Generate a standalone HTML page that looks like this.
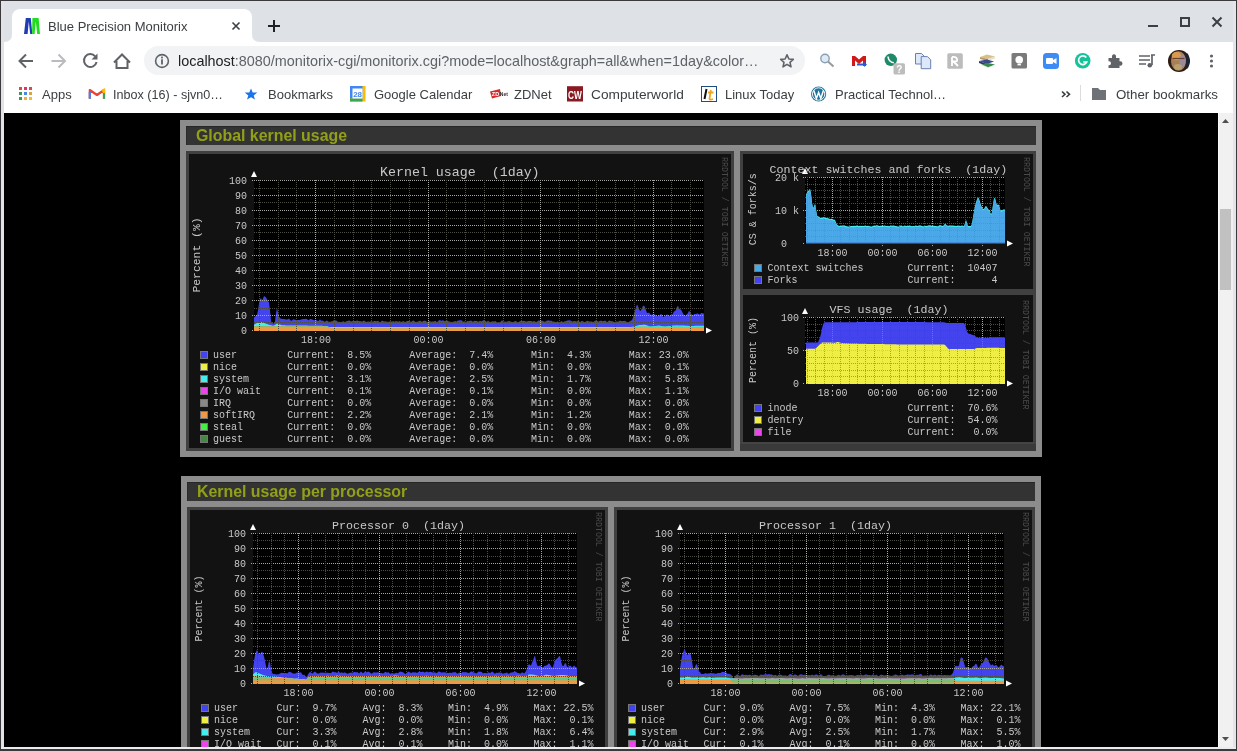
<!DOCTYPE html>
<html><head><meta charset="utf-8">
<style>
*{box-sizing:border-box}
html,body{margin:0;padding:0}
body{width:1237px;height:751px;overflow:hidden;position:relative;background:#dee1e6;font-family:"Liberation Sans",sans-serif}
.a{position:absolute}
svg.a{display:block;will-change:transform}
.ui{will-change:transform;font-family:"Liberation Sans",sans-serif;font-size:13px;color:#3c4043;white-space:nowrap;line-height:16px}
.panel{position:absolute;background:#8c8c8c}
.tbar{position:absolute;background:#333;border-top:1px solid #262626;border-left:1px solid #2a2a2a}
.ttl{will-change:transform;position:absolute;font-family:"Liberation Sans",sans-serif;font-weight:bold;font-size:15.9px;color:#92a018;white-space:nowrap;line-height:19px}
</style></head>
<body>
<!-- tab -->
<div class="a" style="left:12px;top:9px;width:240px;height:34px;background:#fff;border-radius:8px 8px 0 0"></div>
<div id="tabtitle" class="a ui" style="left:48px;top:19px;color:#3c4043">Blue Precision Monitorix</div>

<!-- toolbar -->
<div class="a" style="left:1px;top:42px;width:1235px;height:71px;background:#fff"></div>
<div class="a" style="left:144px;top:46px;width:661px;height:29px;background:#f1f3f4;border-radius:15px"></div>
<div id="url" class="a ui" style="left:178px;top:52px;font-size:14.4px;line-height:18px;color:#5f6368"><span style="color:#202124">localhost</span>:8080/monitorix-cgi/monitorix.cgi?mode=localhost&amp;graph=all&amp;when=1day&amp;color…</div>


<!-- chrome icons -->
<svg class="a" style="left:0;top:0" width="1237" height="113" viewBox="0 0 1237 113">
 <!-- tab flares -->
 <path d="M4,42 Q12,42 12,34 L12,42Z" fill="#fff"/>
 <path d="M252,34 Q252,42 260,42 L252,42Z" fill="#fff"/>
 <!-- favicon M -->
 <polygon points="24,34 25.8,18 30.8,18 32.3,34 30.2,34 28.8,21.5 27.6,34" fill="#1d3db5"/>
 <polygon points="32.1,34 32.4,18 38.6,18 40,34 37.2,34 35.8,21.5 34.6,34" fill="#22dc22"/>
 <!-- tab close -->
 <path d="M232.5,22.5 L239.5,29.5 M239.5,22.5 L232.5,29.5" stroke="#3c4043" stroke-width="1.6" fill="none"/>
 <!-- new tab + -->
 <path d="M274,20 L274,32 M268,26 L280,26" stroke="#202124" stroke-width="2" fill="none"/>
 <!-- window controls -->
 <path d="M1148,26 L1158,26" stroke="#3c4043" stroke-width="2"/>
 <rect x="1181" y="18" width="8" height="8" fill="none" stroke="#3c4043" stroke-width="2"/>
 <path d="M1212.5,17.5 L1221.5,26.5 M1221.5,17.5 L1212.5,26.5" stroke="#3c4043" stroke-width="2" fill="none"/>
 <!-- back / fwd / reload / home -->
 <path d="M19.5,61 L33,61 M26,54.5 L19.5,61 L26,67.5" stroke="#5f6368" stroke-width="2" fill="none"/>
 <path d="M51.5,61 L65,61 M58.5,54.5 L65,61 L58.5,67.5" stroke="#b9bbbe" stroke-width="2" fill="none"/>
 <path d="M95.2,56.3 A6.4,6.4 0 1 0 96.6,62" stroke="#5f6368" stroke-width="2" fill="none"/>
 <polygon points="97.5,53.5 97.5,59.5 91.5,59.5" fill="#5f6368"/>
 <path d="M116.5,61 L116.5,68 L127.5,68 L127.5,61 M114,62.5 L122,54.5 L130,62.5" stroke="#5f6368" stroke-width="2" fill="none"/>
 <!-- info -->
 <circle cx="162" cy="61" r="6.4" fill="none" stroke="#5f6368" stroke-width="1.6"/>
 <rect x="161.1" y="59.3" width="1.8" height="5.2" fill="#5f6368"/>
 <rect x="161.1" y="56.6" width="1.8" height="1.8" fill="#5f6368"/>
 <!-- star -->
 <polygon points="787,54.8 788.9,59 793.3,59.4 790,62.3 791,66.8 787,64.4 783,66.8 784,62.3 780.7,59.4 785.1,59" fill="none" stroke="#5f6368" stroke-width="1.6" stroke-linejoin="round"/>
 <!-- ext: magnifier -->
 <circle cx="825" cy="58.5" r="4.2" fill="#dfeaf5" stroke="#8aa0b8" stroke-width="1.4"/>
 <path d="M828,61.5 L833.5,66.5" stroke="#9a9a9a" stroke-width="2"/>
 <!-- ext: gmail red -->
 <path d="M852,56 L852,66 L855,66 L855,60.5 L859,64 L863,60.5 L863,66 L866,66 L866,56 L863,56 L859,59.5 L855,56Z" fill="#d01a1a"/>
 <path d="M857,63.5 L864,63.5 L864,62 L867,64.5 L864,67 L864,65.5 L857,65.5Z" fill="#2a5ad8"/>
 <!-- ext: green phone + ? -->
 <circle cx="890.8" cy="59.8" r="6.2" fill="#1e8a6a"/>
 <path d="M888,56.5 Q888.5,62 893.8,62.8" stroke="#fff" stroke-width="1.6" fill="none"/>
 <rect x="893.5" y="63.3" width="11.5" height="11.2" rx="1.5" fill="#bdbdbd"/>
 <text x="899.2" y="72.6" font-family="Liberation Sans" font-weight="bold" font-size="10" fill="#fff" text-anchor="middle">?</text>
 <!-- ext: copy -->
 <path d="M915.5,53.5 L921.5,53.5 L924.5,56.5 L924.5,64 L915.5,64Z" fill="#dde8fa" stroke="#6a80b0" stroke-width="1"/>
 <path d="M921.2,56.6 L927.5,56.6 L930.7,59.8 L930.7,68.7 L921.2,68.7Z" fill="#dde8fa" stroke="#6a80b0" stroke-width="1"/>
 <!-- ext: R gray -->
 <rect x="947.3" y="53.2" width="15.5" height="15.5" rx="1.5" fill="#bcbcbc"/>
 <path d="M952,57 L952,66 M952,57 Q958,56.5 957,61 Q955,62 953,61 L958,66" stroke="#fff" stroke-width="1.8" fill="none"/>
 <!-- ext: books -->
 <path d="M980,57 L987,54.5 L995,56.5 L988,59Z" fill="#d8c08a"/>
 <path d="M980,57 L988,59 L988,61 L980,59Z" fill="#b89860"/>
 <path d="M988,59 L995,56.5 L995,58.5 L988,61Z" fill="#e8e0c8"/>
 <path d="M979,61 L987,59.5 L994,61.5 L987,64Z" fill="#3a4a8a"/>
 <path d="M979,61 L987,64 L987,66 L979,63Z" fill="#2a3670"/>
 <path d="M981,64.5 L988,63 L995,64.5 L988,67.6Z" fill="#3a8a4a"/>
 <path d="M981,64.5 L988,67.6 L995,65.5" stroke="#e8e8e8" stroke-width="0.8" fill="none"/>
 <!-- ext: gray bulb -->
 <rect x="1011.5" y="53" width="15.5" height="15.5" rx="1.5" fill="#7a7a7a"/>
 <circle cx="1019.2" cy="59.8" r="3.8" fill="#fff"/>
 <rect x="1017.5" y="63.8" width="3.4" height="1.6" fill="#fff"/>
 <!-- ext: zoom -->
 <rect x="1043" y="53" width="16" height="16" rx="3.5" fill="#3d8cf5"/>
 <rect x="1046" y="58" width="7" height="6" rx="1" fill="#fff"/>
 <polygon points="1053,60 1056.5,58 1056.5,64 1053,62" fill="#fff"/>
 <!-- ext: grammarly -->
 <circle cx="1082.7" cy="60.7" r="7.8" fill="#15c39a"/>
 <path d="M1086.3,57.6 A4.3,4.3 0 1 0 1086.8,62 L1083.3,62" stroke="#fff" stroke-width="1.7" fill="none"/>
 <!-- puzzle -->
 <path d="M1108.5,58 L1112,58 Q1111.5,54.3 1114,54.3 Q1116.5,54.3 1116,58 L1119.5,58 L1119.5,61.2 Q1122.5,60.8 1122.5,63.4 Q1122.5,66 1119.5,65.6 L1119.5,68 L1108.5,68 L1108.5,65.2 Q1111,65.6 1111,63.2 Q1111,60.8 1108.5,61.2Z" fill="#5f6368"/>
 <!-- media -->
 <path d="M1139,56 L1150,56 M1139,60 L1150,60 M1139,64 L1146,64 M1151,55 L1155,55" stroke="#5f6368" stroke-width="1.7"/>
 <path d="M1152,55 L1152,65" stroke="#5f6368" stroke-width="1.7"/>
 <circle cx="1149.8" cy="65.3" r="2.3" fill="#5f6368"/>
 <!-- avatar -->
 <circle cx="1179" cy="61" r="11" fill="#2e1c12"/>
 <ellipse cx="1178.5" cy="61" rx="7.5" ry="9.8" fill="#a88058"/>
 <ellipse cx="1176.5" cy="56" rx="4.8" ry="4.2" fill="#d89a50"/>
 <ellipse cx="1182.5" cy="61" rx="3.2" ry="6.5" fill="#9a8a98"/>
 <ellipse cx="1178" cy="67" rx="4" ry="3" fill="#b8a070"/>
 <path d="M1172.5,58.5 L1184.5,58.5" stroke="#6a4030" stroke-width="1.2"/>
 <path d="M1186.5,54 Q1189,61 1186.5,68" stroke="#1c2434" stroke-width="3" fill="none"/>
 <!-- menu dots -->
 <circle cx="1211.5" cy="56" r="1.6" fill="#5f6368"/>
 <circle cx="1211.5" cy="61" r="1.6" fill="#5f6368"/>
 <circle cx="1211.5" cy="66" r="1.6" fill="#5f6368"/>
 <!-- bookmarks: apps grid -->
 <rect x="19" y="87" width="3" height="3" fill="#d94a4a"/><rect x="24" y="87" width="3" height="3" fill="#e0336a"/><rect x="29" y="87" width="3" height="3" fill="#d94a4a"/>
 <rect x="19" y="92" width="3" height="3" fill="#3a9a55"/><rect x="24" y="92" width="3" height="3" fill="#4a88e0"/><rect x="29" y="92" width="3" height="3" fill="#e0a040"/>
 <rect x="19" y="97" width="3" height="3" fill="#3a9a55"/><rect x="24" y="97" width="3" height="3" fill="#e8b040"/><rect x="29" y="97" width="3" height="3" fill="#e8c030"/>
 <!-- gmail M -->
 <path d="M89.8,98.7 L89.8,90 L97,95 L104,90 L104,98.7" stroke="#ea4335" stroke-width="2.2" fill="none" stroke-linejoin="round"/>
 <path d="M89.8,92 L89.8,98.7" stroke="#4285f4" stroke-width="2.2"/>
 <path d="M104,92 L104,98.7" stroke="#34a853" stroke-width="2.2"/>
 <path d="M102,91 L104,90 L104,93" stroke="#fbbc04" stroke-width="2.4" fill="none"/>
 <!-- blue star -->
 <polygon points="251,88.4 252.7,92.4 257.3,92.6 253.7,95.4 255,99.6 251,97.2 247,99.6 248.3,95.4 244.7,92.6 249.3,92.4" fill="#1a73e8"/>
 <!-- calendar -->
 <rect x="350" y="86" width="15.5" height="15.5" fill="#fbbc04"/>
 <rect x="350" y="86" width="12.5" height="12.5" fill="#4285f4"/>
 <rect x="350" y="98.5" width="12.5" height="3" fill="#34a853"/>
 <rect x="352.5" y="88.5" width="10" height="10" fill="#fff"/>
 <text x="357.6" y="97" font-family="Liberation Sans" font-size="8" font-weight="bold" fill="#4285f4" text-anchor="middle">28</text>
 <!-- zdnet -->
 <polygon points="490,91.5 500,89 501,96 492,98.5" fill="#d52b2b"/>
 <text x="495.5" y="96" font-family="Liberation Sans" font-size="5.5" font-weight="bold" fill="#fff" text-anchor="middle">ZD</text>
 <text x="503.8" y="95.5" font-family="Liberation Sans" font-size="5" font-weight="bold" fill="#333" text-anchor="middle">Net</text>
 <!-- CW -->
 <rect x="567" y="86.2" width="16" height="15.3" fill="#8a1a22"/>
 <text x="575" y="99" font-family="Liberation Sans" font-size="11.5" font-weight="bold" fill="#fff" text-anchor="middle" transform="translate(575,0) scale(0.72,1) translate(-575,0)">CW</text>
 <!-- linux today -->
 <rect x="701.5" y="86.5" width="15" height="15" fill="#fff" stroke="#1e4e80" stroke-width="1"/>
 <path d="M706.5,89 L704.5,99" stroke="#111" stroke-width="2"/>
 <path d="M710.8,90 L709.5,99 Q710,100 713,99 M708,92.5 L713.5,92.5" stroke="#e8a820" stroke-width="1.8" fill="none"/>
 <!-- wordpress -->
 <circle cx="818.6" cy="94" r="7.6" fill="#21759b"/>
 <circle cx="818.6" cy="94" r="6.2" fill="none" stroke="#fff" stroke-width="0.9"/>
 <path d="M813.8,90.5 L816.4,98.5 L818.6,92.5 L820.8,98.5 L823.4,90.5" stroke="#fff" stroke-width="1.5" fill="none"/>
 <!-- chevrons -->
 <path d="M1062,91.5 L1065,94.3 L1062,97 M1066.5,91.5 L1069.5,94.3 L1066.5,97" stroke="#3c4043" stroke-width="1.6" fill="none"/>
 <rect x="1080" y="85" width="1" height="16" fill="#dadce0"/>
 <!-- folder -->
 <path d="M1092,88 L1098,88 L1100,90 L1106,90 L1106,100 L1092,100Z" fill="#6e7175"/>
</svg>

<!-- bookmarks -->
<div class="a ui" style="left:42px;top:87px">Apps</div>
<div class="a ui" style="left:113px;top:87px;font-size:12.6px">Inbox (16) - sjvn0…</div>
<div class="a ui" style="left:268px;top:87px">Bookmarks</div>
<div class="a ui" style="left:374px;top:87px">Google Calendar</div>
<div class="a ui" style="left:514px;top:87px">ZDNet</div>
<div class="a ui" style="left:591px;top:87px;font-size:13.7px">Computerworld</div>
<div class="a ui" style="left:725px;top:87px">Linux Today</div>
<div class="a ui" style="left:835px;top:87px">Practical Technol…</div>
<div class="a ui" style="left:1116px;top:87px;font-size:13.3px">Other bookmarks</div>

<!-- content -->
<div class="a" style="left:1px;top:113px;width:1235px;height:634px;background:#000"></div>

<!-- PANEL 1 -->
<div class="panel" style="left:180px;top:120px;width:862px;height:337px"></div>
<div class="tbar" style="left:186px;top:126px;width:850px;height:19px"></div>
<div class="ttl" style="left:196px;top:126px">Global kernel usage</div>
<svg class="a" style="left:186px;top:151px" width="548" height="300" viewBox="186 151 548 300" font-family='"Liberation Mono",monospace' shape-rendering="crispEdges">
<rect x="186" y="151" width="548" height="300" fill="#404040"/>
<rect x="189" y="154" width="542" height="294" fill="#121212"/>
<rect x="254" y="180" width="450" height="151" fill="#000"/>
<path d="M254,317.5 255,316.5 256,315.9 257,315 258,310.5 259,303.5 260,299.2 261,298.1 262,300.6 263,298.8 264,295.9 265,296.8 266,297.5 267,299.2 268,300.9 269,302.4 270,310.6 271,320.7 272,323.2 273,323 274,323.8 275,321.4 276,313.2 277,308 278,312.7 279,317 280,317.7 281,318.9 282,318.7 283,318.9 284,318.9 285,319.3 286,319.5 287,319.4 288,319.2 289,318.6 290,319.8 291,320.8 292,320.6 293,319.5 294,319.2 295,319.7 296,319.9 297,320 298,319.9 299,320.1 300,319.9 301,319.6 302,319.2 303,319.1 304,319.1 305,318.9 306,318.8 307,319.1 308,320.3 309,320 310,319 311,319 312,319.5 313,319.8 314,320.3 315,320.2 316,319.8 317,320.5 318,321.3 319,320.5 320,319.3 321,320.4 322,320.7 323,320.4 324,321.4 325,321.7 326,321.1 327,320.4 328,321.4 329,321.7 330,321.7 331,321.6 332,321.2 333,321 334,320.1 335,320.6 336,320.6 337,320.9 338,322 339,321.7 340,321.7 341,322.2 342,321.8 343,321.2 344,321.5 345,322.3 346,321.4 347,321 348,320.9 349,320.2 350,320.9 351,321.5 352,321.3 353,321 354,320.9 355,321.1 356,321 357,320.5 358,320.7 359,321.3 360,321.1 361,321.3 362,321.8 363,320.9 364,320.6 365,321.2 366,321.8 367,322 368,321.3 369,321.8 370,321.7 371,320.9 372,321.6 373,321.7 374,321.1 375,321.1 376,321.2 377,321.2 378,320.7 379,321.6 380,322.4 381,321.6 382,320.4 383,321 384,321.6 385,321.2 386,321.4 387,321.7 388,321.7 389,321.7 390,321.3 391,321.4 392,321.7 393,321.1 394,321.5 395,321.8 396,320.9 397,321.2 398,321.8 399,321.2 400,321.2 401,322 402,321.7 403,321.1 404,321.5 405,322 406,321.7 407,321 408,320.9 409,320.9 410,321.2 411,321.9 412,321.3 413,320.6 414,320.8 415,321.7 416,322.1 417,321.7 418,321.6 419,321.3 420,320.4 421,321.2 422,321.9 423,321.1 424,320.7 425,320.7 426,321.1 427,321.9 428,322 429,321.1 430,321.2 431,321.7 432,321.6 433,321.5 434,321.5 435,320.8 436,321.2 437,322.3 438,321.3 439,320.2 440,320.1 441,320.7 442,320.8 443,320.1 444,321.1 445,321.3 446,320.5 447,320.6 448,321 449,321.5 450,321.7 451,321.8 452,322.2 453,321.7 454,321.4 455,321.1 456,321.4 457,321.3 458,320.5 459,320.5 460,320.2 461,320.2 462,320.6 463,321.8 464,321.6 465,321.4 466,321.9 467,321.3 468,321 469,321.3 470,320.8 471,320.5 472,321.3 473,321.8 474,321.1 475,320.8 476,320.9 477,321.1 478,321.8 479,321.6 480,320.8 481,321.3 482,321.3 483,320.3 484,320.3 485,320.4 486,321.5 487,321.7 488,320.6 489,321.4 490,322.1 491,321.8 492,321.5 493,321.3 494,321.4 495,320.9 496,321.5 497,322.5 498,322.3 499,322.2 500,322.3 501,321.2 502,320.2 503,321.3 504,321.8 505,321.5 506,321.7 507,321.7 508,321.3 509,321 510,321.3 511,321.8 512,321.9 513,322 514,321.7 515,320.9 516,321.1 517,321.9 518,322.2 519,321.8 520,321.3 521,320.8 522,321 523,321 524,320.7 525,321.2 526,321.5 527,321.4 528,321 529,321.1 530,321.1 531,321.1 532,321.6 533,321.5 534,321 535,321.5 536,321.9 537,321.4 538,320.9 539,320.2 540,320.9 541,320.9 542,320.4 543,321.2 544,321.6 545,321.8 546,321.3 547,320.6 548,320.5 549,320.4 550,320.7 551,320.7 552,320.9 553,321.7 554,321.6 555,321.8 556,322.3 557,321.4 558,321.5 559,322.4 560,322.3 561,321.3 562,321.2 563,322.3 564,321.4 565,321.3 566,321.3 567,320.6 568,320.6 569,320.2 570,320.6 571,320.8 572,321.5 573,321.5 574,320.9 575,321 576,321.5 577,321.4 578,320.4 579,321.3 580,322 581,321.4 582,320.7 583,321.2 584,322 585,322 586,321.4 587,320.8 588,321.1 589,321.6 590,321.6 591,321.6 592,321.5 593,321.9 594,321.8 595,320.6 596,320.8 597,321 598,321.4 599,321.4 600,320.7 601,320.7 602,321 603,321.2 604,321.1 605,320.6 606,321.2 607,322.2 608,321.5 609,320.4 610,320.7 611,321.3 612,321 613,321.4 614,322 615,321.9 616,321.5 617,321.4 618,321.8 619,321.3 620,320.4 621,320.9 622,321.2 623,321.1 624,320.9 625,320.7 626,321.4 627,321.9 628,322.2 629,321.9 630,321.1 631,320.7 632,320 633,317.8 634,313.5 635,310.5 636,307.2 637,304.6 638,306 639,308.7 640,311.1 641,310.3 642,308.1 643,306 644,305.5 645,307.2 646,310.3 647,313.1 648,312.9 649,312.6 650,313.9 651,314.9 652,314.6 653,314.4 654,314.6 655,314.5 656,315.5 657,316.3 658,316.1 659,315.8 660,314.8 661,314 662,314.8 663,316.7 664,316.8 665,315.7 666,315.4 667,314.3 668,315 669,316.3 670,315.2 671,315 672,315.2 673,313.5 674,311.6 675,311.1 676,309.7 677,306.7 678,306 679,308.1 680,309.5 681,309.5 682,311.5 683,313.5 684,314.7 685,315.9 686,314.9 687,314.3 688,312.9 689,310.4 690,312.2 691,313.7 692,314.7 693,315.4 694,314 695,314 696,313.9 697,313.4 698,313.4 699,314.3 700,314.4 701,312.9 702,312.9 703,313.5 704,313.5 704,331 254,331Z" fill="#4444ee" shape-rendering="auto"/>
<path d="M254,324.7 255,324.2 256,323.6 257,323 258,322.7 259,322.5 260,322.3 261,322.1 262,322.2 263,322.6 264,322.9 265,323.3 266,323.7 267,324.1 268,324.4 269,324.8 270,325.1 271,325.3 272,325.5 273,325.7 274,325.5 275,324.9 276,324.3 277,323.8 278,323.7 279,324.2 280,324.6 281,325.1 282,325.3 283,325.3 284,325.3 285,325.3 286,325.4 287,325.4 288,325.4 289,325.4 290,325.4 291,325.4 292,325.4 293,325.5 294,325.5 295,325.5 296,325.5 297,325.5 298,325.5 299,325.5 300,325.5 301,325.6 302,325.6 303,325.6 304,325.6 305,325.6 306,325.6 307,325.6 308,325.7 309,325.7 310,325.7 311,325.7 312,325.7 313,325.7 314,325.7 315,325.7 316,325.8 317,325.8 318,325.8 319,325.8 320,325.8 321,325.8 322,325.8 323,325.9 324,325.9 325,325.9 326,325.9 327,326.1 328,326.5 329,326.9 330,327.1 331,327.1 332,327.1 333,327.1 334,327.1 335,327.1 336,327.1 337,327.1 338,327.1 339,327.1 340,327.1 341,327.1 342,327.1 343,327.1 344,327.1 345,327.1 346,327.1 347,327.1 348,327.1 349,327.1 350,327.1 351,327.1 352,327.1 353,327.1 354,327.1 355,327.1 356,327.1 357,327.1 358,327.1 359,327.1 360,327.1 361,327.1 362,327.1 363,327.1 364,327.1 365,327.1 366,327.1 367,327.1 368,327.1 369,327.1 370,327.1 371,327.1 372,327.1 373,327.1 374,327.1 375,327.1 376,327.1 377,327.1 378,327.1 379,327.1 380,327.1 381,327.1 382,327.1 383,327.1 384,327.1 385,327.1 386,327.1 387,327.1 388,327.1 389,327.1 390,327.1 391,327.1 392,327.1 393,327.1 394,327.1 395,327.1 396,327.1 397,327.1 398,327.1 399,327.1 400,327.1 401,327.1 402,327.1 403,327.1 404,327.1 405,327.1 406,327.1 407,327.1 408,327.1 409,327.1 410,327.1 411,327.1 412,327.1 413,327.1 414,327.1 415,327.1 416,327.1 417,327.1 418,327.1 419,327.1 420,327.1 421,327.1 422,327.1 423,327.1 424,327.1 425,327.1 426,327.1 427,327.1 428,327.1 429,327.1 430,327.1 431,327.1 432,327.1 433,327.1 434,327.1 435,327.1 436,327.1 437,327.1 438,327.1 439,327.1 440,327.1 441,327.1 442,327.1 443,327.1 444,327.1 445,327.1 446,327.1 447,327.1 448,327.1 449,327.1 450,327.1 451,327.1 452,327.1 453,327.1 454,327.1 455,327.1 456,327.1 457,327.1 458,327.1 459,327.1 460,327.1 461,327.1 462,327.1 463,327.1 464,327.1 465,327.1 466,327.1 467,327.1 468,327.1 469,327.1 470,327.1 471,327.1 472,327.1 473,327.1 474,327.1 475,327.1 476,327.1 477,327.1 478,327.1 479,327.1 480,327.1 481,327.1 482,327.1 483,327.1 484,327.1 485,327.1 486,327.1 487,327.1 488,327.1 489,327.1 490,327.1 491,327.1 492,327.1 493,327.1 494,327.1 495,327.1 496,327.1 497,327.1 498,327.1 499,327.1 500,327.1 501,327.1 502,327.1 503,327.1 504,327.1 505,327.1 506,327.1 507,327.1 508,327.1 509,327.1 510,327.1 511,327.1 512,327.1 513,327.1 514,327.1 515,327.1 516,327.1 517,327.1 518,327.1 519,327.1 520,327.1 521,327.1 522,327.1 523,327.1 524,327.1 525,327.1 526,327.1 527,327.1 528,327.1 529,327.1 530,327.1 531,327.1 532,327.1 533,327.1 534,327.1 535,327.1 536,327.1 537,327.1 538,327.1 539,327.1 540,327.1 541,327.1 542,327.1 543,327.1 544,327.1 545,327.1 546,327.1 547,327.1 548,327.1 549,327.1 550,327.1 551,327.1 552,327.1 553,327.1 554,327.1 555,327.1 556,327.1 557,327.1 558,327.1 559,327.1 560,327.1 561,327.1 562,327.1 563,327.1 564,327.1 565,327.1 566,327.1 567,327.1 568,327.1 569,327.1 570,327.1 571,327.1 572,327.1 573,327.1 574,327.1 575,327.1 576,327.1 577,327.1 578,327.1 579,327.1 580,327.1 581,327.1 582,327.1 583,327.1 584,327.1 585,327.1 586,327.1 587,327.1 588,327.1 589,327.1 590,327.1 591,327.1 592,327.1 593,327.1 594,327.1 595,327.1 596,327.1 597,327.1 598,327.1 599,327.1 600,327.1 601,327.1 602,327.1 603,327.1 604,327.1 605,327.1 606,327.1 607,327.1 608,327.1 609,327.1 610,327.1 611,327.1 612,327.1 613,327.1 614,327.1 615,327.1 616,327.1 617,327.1 618,327.1 619,327.1 620,327.1 621,327.1 622,327.1 623,327.1 624,327.1 625,327.1 626,327.1 627,327.1 628,327.1 629,327.1 630,327 631,326.9 632,326.8 633,326.7 634,326.6 635,326.4 636,326.1 637,325.8 638,325.4 639,325.1 640,325 641,324.9 642,324.9 643,324.8 644,324.8 645,324.7 646,324.9 647,325.4 648,325.8 649,326.3 650,326.5 651,326.4 652,326.3 653,326.2 654,326.1 655,326 656,325.9 657,325.8 658,325.7 659,325.6 660,325.7 661,325.9 662,326.1 663,326.2 664,326.4 665,326.4 666,326.4 667,326.2 668,326.1 669,326.1 670,325.9 671,325.9 672,325.8 673,325.6 674,325.6 675,325.4 676,325.4 677,325.3 678,325.4 679,325.4 680,325.5 681,325.5 682,325.6 683,325.6 684,325.6 685,325.7 686,325.7 687,325.8 688,325.8 689,325.9 690,325.9 691,325.9 692,325.9 693,325.9 694,325.9 695,325.8 696,325.8 697,325.8 698,325.8 699,325.8 700,325.8 701,325.8 702,325.8 703,325.8 704,325.8 704,331 254,331Z" fill="#44eeee" shape-rendering="auto"/>
<path d="M254,325.9 255,325.9 256,325.9 257,325.9 258,325.9 259,325.9 260,325.9 261,325.9 262,325.9 263,325.9 264,325.9 265,325.9 266,326 267,326 268,326 269,326 270,326 271,326 272,326 273,326 274,326 275,326 276,326 277,326 278,326 279,326 280,326 281,326 282,326 283,326 284,326 285,326 286,326 287,326 288,326 289,326 290,326.1 291,326.1 292,326.1 293,326.1 294,326.1 295,326.1 296,326.1 297,326.1 298,326.1 299,326.1 300,326.1 301,326.1 302,326.1 303,326.1 304,326.1 305,326.1 306,326.1 307,326.1 308,326.1 309,326.1 310,326.1 311,326.1 312,326.1 313,326.1 314,326.1 315,326.2 316,326.2 317,326.2 318,326.2 319,326.2 320,326.2 321,326.2 322,326.2 323,326.2 324,326.2 325,326.2 326,326.2 327,326.4 328,326.8 329,327.2 330,327.6 331,327.9 332,327.9 333,327.9 334,327.9 335,327.9 336,327.9 337,327.9 338,327.9 339,327.9 340,327.9 341,327.9 342,327.9 343,327.9 344,327.9 345,327.9 346,327.9 347,327.9 348,327.9 349,327.9 350,327.9 351,327.9 352,327.9 353,327.9 354,327.9 355,327.9 356,327.9 357,327.9 358,327.9 359,327.9 360,327.9 361,327.9 362,327.9 363,327.9 364,327.9 365,327.9 366,327.9 367,327.9 368,327.9 369,327.9 370,327.9 371,327.9 372,327.9 373,327.9 374,327.9 375,327.9 376,327.9 377,327.9 378,327.9 379,327.9 380,327.9 381,327.9 382,327.9 383,327.9 384,327.9 385,327.9 386,327.9 387,327.9 388,327.9 389,327.9 390,327.9 391,327.9 392,327.9 393,327.9 394,327.9 395,327.9 396,327.9 397,327.9 398,327.9 399,327.9 400,327.9 401,327.9 402,327.9 403,327.9 404,327.9 405,327.9 406,327.9 407,327.9 408,327.9 409,327.9 410,327.9 411,327.9 412,327.9 413,327.9 414,327.9 415,327.9 416,327.9 417,327.9 418,327.9 419,327.9 420,327.9 421,327.9 422,327.9 423,327.9 424,327.9 425,327.9 426,327.9 427,327.9 428,327.9 429,327.9 430,327.9 431,327.9 432,327.9 433,327.9 434,327.9 435,327.9 436,327.9 437,327.9 438,327.9 439,327.9 440,327.9 441,327.9 442,327.9 443,327.9 444,327.9 445,327.9 446,327.9 447,327.9 448,327.9 449,327.9 450,327.9 451,327.9 452,327.9 453,327.9 454,327.9 455,327.9 456,327.9 457,327.9 458,327.9 459,327.9 460,327.9 461,327.9 462,327.9 463,327.9 464,327.9 465,327.9 466,327.9 467,327.9 468,327.9 469,327.9 470,327.9 471,327.9 472,327.9 473,327.9 474,327.9 475,327.9 476,327.9 477,327.9 478,327.9 479,327.9 480,327.9 481,327.9 482,327.9 483,327.9 484,327.9 485,327.9 486,327.9 487,327.9 488,327.9 489,327.9 490,327.9 491,327.9 492,327.9 493,327.9 494,327.9 495,327.9 496,327.9 497,327.9 498,327.9 499,327.9 500,327.9 501,327.9 502,327.9 503,327.9 504,327.9 505,327.9 506,327.9 507,327.9 508,327.9 509,327.9 510,327.9 511,327.9 512,327.9 513,327.9 514,327.9 515,327.9 516,327.9 517,327.9 518,327.9 519,327.9 520,327.9 521,327.9 522,327.9 523,327.9 524,327.9 525,327.9 526,327.9 527,327.9 528,327.9 529,327.9 530,327.9 531,327.9 532,327.9 533,327.9 534,327.9 535,327.9 536,327.9 537,327.9 538,327.9 539,327.9 540,327.9 541,327.9 542,327.9 543,327.9 544,327.9 545,327.9 546,327.9 547,327.9 548,327.9 549,327.9 550,327.9 551,327.9 552,327.9 553,327.9 554,327.9 555,327.9 556,327.9 557,327.9 558,327.9 559,327.9 560,327.9 561,327.9 562,327.9 563,327.9 564,327.9 565,327.9 566,327.9 567,327.9 568,327.9 569,327.9 570,327.9 571,327.9 572,327.9 573,327.9 574,327.9 575,327.9 576,327.9 577,327.9 578,327.9 579,327.9 580,327.9 581,327.9 582,327.9 583,327.9 584,327.9 585,327.9 586,327.9 587,327.9 588,327.9 589,327.9 590,327.9 591,327.9 592,327.9 593,327.9 594,327.9 595,327.9 596,327.9 597,327.9 598,327.9 599,327.9 600,327.9 601,327.9 602,327.9 603,327.9 604,327.9 605,327.9 606,327.9 607,327.9 608,327.9 609,327.9 610,327.9 611,327.9 612,327.9 613,327.9 614,327.9 615,327.9 616,327.9 617,327.9 618,327.9 619,327.9 620,327.9 621,327.9 622,327.9 623,327.9 624,327.9 625,327.9 626,327.9 627,327.9 628,327.9 629,327.9 630,327.8 631,327.6 632,327.5 633,327.3 634,327.2 635,327 636,326.9 637,326.7 638,326.6 639,326.4 640,326.4 641,326.4 642,326.4 643,326.4 644,326.4 645,326.4 646,326.4 647,326.4 648,326.4 649,326.4 650,326.4 651,326.4 652,326.4 653,326.4 654,326.5 655,326.5 656,326.5 657,326.5 658,326.5 659,326.5 660,326.5 661,326.5 662,326.5 663,326.5 664,326.5 665,326.5 666,326.5 667,326.5 668,326.6 669,326.6 670,326.6 671,326.6 672,326.6 673,326.6 674,326.6 675,326.6 676,326.6 677,326.6 678,326.6 679,326.6 680,326.6 681,326.6 682,326.6 683,326.7 684,326.7 685,326.7 686,326.7 687,326.7 688,326.7 689,326.7 690,326.7 691,326.7 692,326.7 693,326.7 694,326.7 695,326.7 696,326.7 697,326.8 698,326.8 699,326.8 700,326.8 701,326.8 702,326.8 703,326.8 704,326.8 704,331 254,331Z" fill="#44cc88" shape-rendering="auto"/>
<path d="M254,326.5 255,326.5 256,326.5 257,326.5 258,326.5 259,326.5 260,326.5 261,326.5 262,326.5 263,326.5 264,326.5 265,326.5 266,326.5 267,326.5 268,326.5 269,326.5 270,326.5 271,326.5 272,326.5 273,326.5 274,326.5 275,326.5 276,326.5 277,326.5 278,326.6 279,326.6 280,326.6 281,326.6 282,326.6 283,326.6 284,326.6 285,326.6 286,326.6 287,326.6 288,326.6 289,326.6 290,326.6 291,326.6 292,326.6 293,326.6 294,326.6 295,326.6 296,326.6 297,326.6 298,326.6 299,326.6 300,326.6 301,326.6 302,326.6 303,326.6 304,326.6 305,326.6 306,326.6 307,326.6 308,326.6 309,326.6 310,326.6 311,326.6 312,326.6 313,326.6 314,326.6 315,326.6 316,326.6 317,326.6 318,326.6 319,326.6 320,326.6 321,326.6 322,326.6 323,326.6 324,326.6 325,326.6 326,326.6 327,326.9 328,327.3 329,327.7 330,328.1 331,328.3 332,328.3 333,328.3 334,328.3 335,328.3 336,328.3 337,328.3 338,328.3 339,328.3 340,328.3 341,328.3 342,328.3 343,328.3 344,328.3 345,328.3 346,328.3 347,328.3 348,328.3 349,328.3 350,328.3 351,328.3 352,328.3 353,328.3 354,328.3 355,328.3 356,328.3 357,328.3 358,328.3 359,328.3 360,328.3 361,328.3 362,328.3 363,328.3 364,328.3 365,328.3 366,328.3 367,328.3 368,328.3 369,328.3 370,328.3 371,328.3 372,328.3 373,328.3 374,328.3 375,328.3 376,328.3 377,328.3 378,328.3 379,328.3 380,328.3 381,328.3 382,328.3 383,328.3 384,328.3 385,328.3 386,328.3 387,328.3 388,328.3 389,328.3 390,328.3 391,328.3 392,328.3 393,328.3 394,328.3 395,328.3 396,328.3 397,328.3 398,328.3 399,328.3 400,328.3 401,328.3 402,328.3 403,328.3 404,328.3 405,328.3 406,328.3 407,328.3 408,328.3 409,328.3 410,328.3 411,328.3 412,328.3 413,328.3 414,328.3 415,328.3 416,328.3 417,328.3 418,328.3 419,328.3 420,328.3 421,328.3 422,328.3 423,328.3 424,328.3 425,328.3 426,328.3 427,328.3 428,328.3 429,328.3 430,328.3 431,328.3 432,328.3 433,328.3 434,328.3 435,328.3 436,328.3 437,328.3 438,328.3 439,328.3 440,328.3 441,328.3 442,328.3 443,328.3 444,328.3 445,328.3 446,328.3 447,328.3 448,328.3 449,328.3 450,328.3 451,328.3 452,328.3 453,328.3 454,328.3 455,328.3 456,328.3 457,328.3 458,328.3 459,328.3 460,328.3 461,328.3 462,328.3 463,328.3 464,328.3 465,328.3 466,328.3 467,328.3 468,328.3 469,328.3 470,328.3 471,328.3 472,328.3 473,328.3 474,328.3 475,328.3 476,328.3 477,328.3 478,328.3 479,328.3 480,328.3 481,328.3 482,328.3 483,328.3 484,328.3 485,328.3 486,328.3 487,328.3 488,328.3 489,328.3 490,328.3 491,328.3 492,328.3 493,328.3 494,328.3 495,328.3 496,328.3 497,328.3 498,328.3 499,328.3 500,328.3 501,328.3 502,328.3 503,328.3 504,328.3 505,328.3 506,328.3 507,328.3 508,328.3 509,328.3 510,328.3 511,328.3 512,328.3 513,328.3 514,328.3 515,328.3 516,328.3 517,328.3 518,328.3 519,328.3 520,328.3 521,328.3 522,328.3 523,328.3 524,328.3 525,328.3 526,328.3 527,328.3 528,328.3 529,328.3 530,328.3 531,328.3 532,328.3 533,328.3 534,328.3 535,328.3 536,328.3 537,328.3 538,328.3 539,328.3 540,328.3 541,328.3 542,328.3 543,328.3 544,328.3 545,328.3 546,328.3 547,328.3 548,328.3 549,328.3 550,328.3 551,328.3 552,328.3 553,328.3 554,328.3 555,328.3 556,328.3 557,328.3 558,328.3 559,328.3 560,328.3 561,328.3 562,328.3 563,328.3 564,328.3 565,328.3 566,328.3 567,328.3 568,328.3 569,328.3 570,328.3 571,328.3 572,328.3 573,328.3 574,328.3 575,328.3 576,328.3 577,328.3 578,328.3 579,328.3 580,328.3 581,328.3 582,328.3 583,328.3 584,328.3 585,328.3 586,328.3 587,328.3 588,328.3 589,328.3 590,328.3 591,328.3 592,328.3 593,328.3 594,328.3 595,328.3 596,328.3 597,328.3 598,328.3 599,328.3 600,328.3 601,328.3 602,328.3 603,328.3 604,328.3 605,328.3 606,328.3 607,328.3 608,328.3 609,328.3 610,328.3 611,328.3 612,328.3 613,328.3 614,328.3 615,328.3 616,328.3 617,328.3 618,328.3 619,328.3 620,328.3 621,328.3 622,328.3 623,328.3 624,328.3 625,328.3 626,328.3 627,328.3 628,328.3 629,328.3 630,328.2 631,328.1 632,327.9 633,327.8 634,327.6 635,327.5 636,327.3 637,327.2 638,327 639,326.9 640,326.8 641,326.8 642,326.8 643,326.8 644,326.8 645,326.8 646,326.8 647,326.9 648,326.9 649,326.9 650,326.9 651,326.9 652,326.9 653,326.9 654,326.9 655,326.9 656,326.9 657,326.9 658,326.9 659,326.9 660,326.9 661,327 662,327 663,327 664,327 665,327 666,327 667,327 668,327 669,327 670,327 671,327 672,327 673,327 674,327 675,327 676,327.1 677,327.1 678,327.1 679,327.1 680,327.1 681,327.1 682,327.1 683,327.1 684,327.1 685,327.1 686,327.1 687,327.1 688,327.1 689,327.1 690,327.2 691,327.2 692,327.2 693,327.2 694,327.2 695,327.2 696,327.2 697,327.2 698,327.2 699,327.2 700,327.2 701,327.2 702,327.2 703,327.2 704,327.2 704,331 254,331Z" fill="#ee9944" shape-rendering="auto"/>
<line x1="252" y1="330.5" x2="254" y2="330.5" stroke="#a8a8a2" stroke-width="1" stroke-dasharray="1 1"/>
<line x1="254" y1="322.5" x2="704" y2="322.5" stroke="#4c4c42" stroke-width="1" stroke-dasharray="1 1"/>
<line x1="252" y1="315.5" x2="704" y2="315.5" stroke="#a8a8a2" stroke-width="1" stroke-dasharray="1 1"/>
<line x1="254" y1="308.5" x2="704" y2="308.5" stroke="#4c4c42" stroke-width="1" stroke-dasharray="1 1"/>
<line x1="252" y1="300.5" x2="704" y2="300.5" stroke="#a8a8a2" stroke-width="1" stroke-dasharray="1 1"/>
<line x1="254" y1="292.5" x2="704" y2="292.5" stroke="#4c4c42" stroke-width="1" stroke-dasharray="1 1"/>
<line x1="252" y1="285.5" x2="704" y2="285.5" stroke="#a8a8a2" stroke-width="1" stroke-dasharray="1 1"/>
<line x1="254" y1="278.5" x2="704" y2="278.5" stroke="#4c4c42" stroke-width="1" stroke-dasharray="1 1"/>
<line x1="252" y1="270.5" x2="704" y2="270.5" stroke="#a8a8a2" stroke-width="1" stroke-dasharray="1 1"/>
<line x1="254" y1="262.5" x2="704" y2="262.5" stroke="#4c4c42" stroke-width="1" stroke-dasharray="1 1"/>
<line x1="252" y1="255.5" x2="704" y2="255.5" stroke="#a8a8a2" stroke-width="1" stroke-dasharray="1 1"/>
<line x1="254" y1="248.5" x2="704" y2="248.5" stroke="#4c4c42" stroke-width="1" stroke-dasharray="1 1"/>
<line x1="252" y1="240.5" x2="704" y2="240.5" stroke="#a8a8a2" stroke-width="1" stroke-dasharray="1 1"/>
<line x1="254" y1="232.5" x2="704" y2="232.5" stroke="#4c4c42" stroke-width="1" stroke-dasharray="1 1"/>
<line x1="252" y1="225.5" x2="704" y2="225.5" stroke="#a8a8a2" stroke-width="1" stroke-dasharray="1 1"/>
<line x1="254" y1="218.5" x2="704" y2="218.5" stroke="#4c4c42" stroke-width="1" stroke-dasharray="1 1"/>
<line x1="252" y1="210.5" x2="704" y2="210.5" stroke="#a8a8a2" stroke-width="1" stroke-dasharray="1 1"/>
<line x1="254" y1="202.5" x2="704" y2="202.5" stroke="#4c4c42" stroke-width="1" stroke-dasharray="1 1"/>
<line x1="252" y1="195.5" x2="704" y2="195.5" stroke="#a8a8a2" stroke-width="1" stroke-dasharray="1 1"/>
<line x1="254" y1="188.5" x2="704" y2="188.5" stroke="#4c4c42" stroke-width="1" stroke-dasharray="1 1"/>
<line x1="252" y1="180.5" x2="704" y2="180.5" stroke="#a8a8a2" stroke-width="1" stroke-dasharray="1 1"/>
<line x1="259.5" y1="180" x2="259.5" y2="331" stroke="#4c4c42" stroke-width="1" stroke-dasharray="1 1"/>
<line x1="278.5" y1="180" x2="278.5" y2="331" stroke="#4c4c42" stroke-width="1" stroke-dasharray="1 1"/>
<line x1="296.5" y1="180" x2="296.5" y2="331" stroke="#4c4c42" stroke-width="1" stroke-dasharray="1 1"/>
<line x1="315.5" y1="180" x2="315.5" y2="333" stroke="#a8a8a2" stroke-width="1" stroke-dasharray="1 1"/>
<line x1="334.5" y1="180" x2="334.5" y2="331" stroke="#4c4c42" stroke-width="1" stroke-dasharray="1 1"/>
<line x1="353.5" y1="180" x2="353.5" y2="331" stroke="#4c4c42" stroke-width="1" stroke-dasharray="1 1"/>
<line x1="371.5" y1="180" x2="371.5" y2="331" stroke="#4c4c42" stroke-width="1" stroke-dasharray="1 1"/>
<line x1="390.5" y1="180" x2="390.5" y2="331" stroke="#4c4c42" stroke-width="1" stroke-dasharray="1 1"/>
<line x1="409.5" y1="180" x2="409.5" y2="331" stroke="#4c4c42" stroke-width="1" stroke-dasharray="1 1"/>
<line x1="428.5" y1="180" x2="428.5" y2="333" stroke="#a8a8a2" stroke-width="1" stroke-dasharray="1 1"/>
<line x1="446.5" y1="180" x2="446.5" y2="331" stroke="#4c4c42" stroke-width="1" stroke-dasharray="1 1"/>
<line x1="465.5" y1="180" x2="465.5" y2="331" stroke="#4c4c42" stroke-width="1" stroke-dasharray="1 1"/>
<line x1="484.5" y1="180" x2="484.5" y2="331" stroke="#4c4c42" stroke-width="1" stroke-dasharray="1 1"/>
<line x1="503.5" y1="180" x2="503.5" y2="331" stroke="#4c4c42" stroke-width="1" stroke-dasharray="1 1"/>
<line x1="521.5" y1="180" x2="521.5" y2="331" stroke="#4c4c42" stroke-width="1" stroke-dasharray="1 1"/>
<line x1="540.5" y1="180" x2="540.5" y2="333" stroke="#a8a8a2" stroke-width="1" stroke-dasharray="1 1"/>
<line x1="559.5" y1="180" x2="559.5" y2="331" stroke="#4c4c42" stroke-width="1" stroke-dasharray="1 1"/>
<line x1="578.5" y1="180" x2="578.5" y2="331" stroke="#4c4c42" stroke-width="1" stroke-dasharray="1 1"/>
<line x1="596.5" y1="180" x2="596.5" y2="331" stroke="#4c4c42" stroke-width="1" stroke-dasharray="1 1"/>
<line x1="615.5" y1="180" x2="615.5" y2="331" stroke="#4c4c42" stroke-width="1" stroke-dasharray="1 1"/>
<line x1="634.5" y1="180" x2="634.5" y2="331" stroke="#4c4c42" stroke-width="1" stroke-dasharray="1 1"/>
<line x1="653.5" y1="180" x2="653.5" y2="333" stroke="#a8a8a2" stroke-width="1" stroke-dasharray="1 1"/>
<line x1="671.5" y1="180" x2="671.5" y2="331" stroke="#4c4c42" stroke-width="1" stroke-dasharray="1 1"/>
<line x1="690.5" y1="180" x2="690.5" y2="331" stroke="#4c4c42" stroke-width="1" stroke-dasharray="1 1"/>
<path d="M251,177 L257,177 L254,171Z" fill="#fff" shape-rendering="auto"/>
<path d="M706,327.5 L706,333.5 L712,330.5Z" fill="#fff" shape-rendering="auto"/>
<text x="247" y="334" font-size="10" fill="#c8c8c8" text-anchor="end"  xml:space="preserve">0</text>
<text x="247" y="319" font-size="10" fill="#c8c8c8" text-anchor="end"  xml:space="preserve">10</text>
<text x="247" y="304" font-size="10" fill="#c8c8c8" text-anchor="end"  xml:space="preserve">20</text>
<text x="247" y="289" font-size="10" fill="#c8c8c8" text-anchor="end"  xml:space="preserve">30</text>
<text x="247" y="274" font-size="10" fill="#c8c8c8" text-anchor="end"  xml:space="preserve">40</text>
<text x="247" y="259" font-size="10" fill="#c8c8c8" text-anchor="end"  xml:space="preserve">50</text>
<text x="247" y="244" font-size="10" fill="#c8c8c8" text-anchor="end"  xml:space="preserve">60</text>
<text x="247" y="229" font-size="10" fill="#c8c8c8" text-anchor="end"  xml:space="preserve">70</text>
<text x="247" y="214" font-size="10" fill="#c8c8c8" text-anchor="end"  xml:space="preserve">80</text>
<text x="247" y="199" font-size="10" fill="#c8c8c8" text-anchor="end"  xml:space="preserve">90</text>
<text x="247" y="184" font-size="10" fill="#c8c8c8" text-anchor="end"  xml:space="preserve">100</text>
<text x="316.0" y="343" font-size="10" fill="#c8c8c8" text-anchor="middle"  xml:space="preserve">18:00</text>
<text x="428.5" y="343" font-size="10" fill="#c8c8c8" text-anchor="middle"  xml:space="preserve">00:00</text>
<text x="541.0" y="343" font-size="10" fill="#c8c8c8" text-anchor="middle"  xml:space="preserve">06:00</text>
<text x="653.5" y="343" font-size="10" fill="#c8c8c8" text-anchor="middle"  xml:space="preserve">12:00</text>
<text x="380" y="176" font-size="13.3" fill="#c8c8c8" text-anchor="start"  xml:space="preserve">Kernel usage  (1day)</text>
<g transform="translate(199.5,255) rotate(-90)"><text x="0" y="0" font-size="11.4" fill="#c8c8c8" text-anchor="middle"  xml:space="preserve">Percent (%)</text></g>
<g transform="translate(721.5,157) rotate(90)"><text x="0" y="0" font-size="8.3" fill="#4a4a4a" text-anchor="start"  xml:space="preserve">RRDTOOL / TOBI OETIKER</text></g>
<rect x="200" y="351" width="8" height="8" fill="#777"/><rect x="201" y="352" width="6" height="6" fill="#4444ee"/>
<text x="213" y="358" font-size="10" fill="#c8c8c8" text-anchor="start"  xml:space="preserve">user</text>
<text x="287.3" y="358" font-size="10" fill="#c8c8c8" text-anchor="start"  xml:space="preserve">Current:  8.5%</text>
<text x="409.2" y="358" font-size="10" fill="#c8c8c8" text-anchor="start"  xml:space="preserve">Average:  7.4%</text>
<text x="531" y="358" font-size="10" fill="#c8c8c8" text-anchor="start"  xml:space="preserve">Min:  4.3%</text>
<text x="628.7" y="358" font-size="10" fill="#c8c8c8" text-anchor="start"  xml:space="preserve">Max: 23.0%</text>
<rect x="200" y="363" width="8" height="8" fill="#777"/><rect x="201" y="364" width="6" height="6" fill="#eeee44"/>
<text x="213" y="370" font-size="10" fill="#c8c8c8" text-anchor="start"  xml:space="preserve">nice</text>
<text x="287.3" y="370" font-size="10" fill="#c8c8c8" text-anchor="start"  xml:space="preserve">Current:  0.0%</text>
<text x="409.2" y="370" font-size="10" fill="#c8c8c8" text-anchor="start"  xml:space="preserve">Average:  0.0%</text>
<text x="531" y="370" font-size="10" fill="#c8c8c8" text-anchor="start"  xml:space="preserve">Min:  0.0%</text>
<text x="628.7" y="370" font-size="10" fill="#c8c8c8" text-anchor="start"  xml:space="preserve">Max:  0.1%</text>
<rect x="200" y="375" width="8" height="8" fill="#777"/><rect x="201" y="376" width="6" height="6" fill="#44eeee"/>
<text x="213" y="382" font-size="10" fill="#c8c8c8" text-anchor="start"  xml:space="preserve">system</text>
<text x="287.3" y="382" font-size="10" fill="#c8c8c8" text-anchor="start"  xml:space="preserve">Current:  3.1%</text>
<text x="409.2" y="382" font-size="10" fill="#c8c8c8" text-anchor="start"  xml:space="preserve">Average:  2.5%</text>
<text x="531" y="382" font-size="10" fill="#c8c8c8" text-anchor="start"  xml:space="preserve">Min:  1.7%</text>
<text x="628.7" y="382" font-size="10" fill="#c8c8c8" text-anchor="start"  xml:space="preserve">Max:  5.8%</text>
<rect x="200" y="387" width="8" height="8" fill="#777"/><rect x="201" y="388" width="6" height="6" fill="#ee44ee"/>
<text x="213" y="394" font-size="10" fill="#c8c8c8" text-anchor="start"  xml:space="preserve">I/O wait</text>
<text x="287.3" y="394" font-size="10" fill="#c8c8c8" text-anchor="start"  xml:space="preserve">Current:  0.1%</text>
<text x="409.2" y="394" font-size="10" fill="#c8c8c8" text-anchor="start"  xml:space="preserve">Average:  0.1%</text>
<text x="531" y="394" font-size="10" fill="#c8c8c8" text-anchor="start"  xml:space="preserve">Min:  0.0%</text>
<text x="628.7" y="394" font-size="10" fill="#c8c8c8" text-anchor="start"  xml:space="preserve">Max:  1.1%</text>
<rect x="200" y="399" width="8" height="8" fill="#777"/><rect x="201" y="400" width="6" height="6" fill="#888888"/>
<text x="213" y="406" font-size="10" fill="#c8c8c8" text-anchor="start"  xml:space="preserve">IRQ</text>
<text x="287.3" y="406" font-size="10" fill="#c8c8c8" text-anchor="start"  xml:space="preserve">Current:  0.0%</text>
<text x="409.2" y="406" font-size="10" fill="#c8c8c8" text-anchor="start"  xml:space="preserve">Average:  0.0%</text>
<text x="531" y="406" font-size="10" fill="#c8c8c8" text-anchor="start"  xml:space="preserve">Min:  0.0%</text>
<text x="628.7" y="406" font-size="10" fill="#c8c8c8" text-anchor="start"  xml:space="preserve">Max:  0.0%</text>
<rect x="200" y="411" width="8" height="8" fill="#777"/><rect x="201" y="412" width="6" height="6" fill="#ee9944"/>
<text x="213" y="418" font-size="10" fill="#c8c8c8" text-anchor="start"  xml:space="preserve">softIRQ</text>
<text x="287.3" y="418" font-size="10" fill="#c8c8c8" text-anchor="start"  xml:space="preserve">Current:  2.2%</text>
<text x="409.2" y="418" font-size="10" fill="#c8c8c8" text-anchor="start"  xml:space="preserve">Average:  2.1%</text>
<text x="531" y="418" font-size="10" fill="#c8c8c8" text-anchor="start"  xml:space="preserve">Min:  1.2%</text>
<text x="628.7" y="418" font-size="10" fill="#c8c8c8" text-anchor="start"  xml:space="preserve">Max:  2.6%</text>
<rect x="200" y="423" width="8" height="8" fill="#777"/><rect x="201" y="424" width="6" height="6" fill="#44ee44"/>
<text x="213" y="430" font-size="10" fill="#c8c8c8" text-anchor="start"  xml:space="preserve">steal</text>
<text x="287.3" y="430" font-size="10" fill="#c8c8c8" text-anchor="start"  xml:space="preserve">Current:  0.0%</text>
<text x="409.2" y="430" font-size="10" fill="#c8c8c8" text-anchor="start"  xml:space="preserve">Average:  0.0%</text>
<text x="531" y="430" font-size="10" fill="#c8c8c8" text-anchor="start"  xml:space="preserve">Min:  0.0%</text>
<text x="628.7" y="430" font-size="10" fill="#c8c8c8" text-anchor="start"  xml:space="preserve">Max:  0.0%</text>
<rect x="200" y="435" width="8" height="8" fill="#777"/><rect x="201" y="436" width="6" height="6" fill="#448844"/>
<text x="213" y="442" font-size="10" fill="#c8c8c8" text-anchor="start"  xml:space="preserve">guest</text>
<text x="287.3" y="442" font-size="10" fill="#c8c8c8" text-anchor="start"  xml:space="preserve">Current:  0.0%</text>
<text x="409.2" y="442" font-size="10" fill="#c8c8c8" text-anchor="start"  xml:space="preserve">Average:  0.0%</text>
<text x="531" y="442" font-size="10" fill="#c8c8c8" text-anchor="start"  xml:space="preserve">Min:  0.0%</text>
<text x="628.7" y="442" font-size="10" fill="#c8c8c8" text-anchor="start"  xml:space="preserve">Max:  0.0%</text>
</svg>
<svg class="a" style="left:740px;top:151px" width="296" height="141" viewBox="740 151 296 141" font-family='"Liberation Mono",monospace' shape-rendering="crispEdges">
<rect x="740" y="151" width="296" height="141" fill="#404040"/>
<rect x="743" y="154" width="290" height="135" fill="#121212"/>
<rect x="805" y="177" width="200" height="67" fill="#000"/>
<line x1="803" y1="243.5" x2="805" y2="243.5" stroke="#a8a8a2" stroke-width="1" stroke-dasharray="1 1"/>
<line x1="805" y1="236.5" x2="1005" y2="236.5" stroke="#4c4c42" stroke-width="1" stroke-dasharray="1 1"/>
<line x1="805" y1="230.5" x2="1005" y2="230.5" stroke="#4c4c42" stroke-width="1" stroke-dasharray="1 1"/>
<line x1="805" y1="223.5" x2="1005" y2="223.5" stroke="#4c4c42" stroke-width="1" stroke-dasharray="1 1"/>
<line x1="805" y1="217.5" x2="1005" y2="217.5" stroke="#4c4c42" stroke-width="1" stroke-dasharray="1 1"/>
<line x1="803" y1="210.5" x2="1005" y2="210.5" stroke="#a8a8a2" stroke-width="1" stroke-dasharray="1 1"/>
<line x1="805" y1="203.5" x2="1005" y2="203.5" stroke="#4c4c42" stroke-width="1" stroke-dasharray="1 1"/>
<line x1="805" y1="197.5" x2="1005" y2="197.5" stroke="#4c4c42" stroke-width="1" stroke-dasharray="1 1"/>
<line x1="805" y1="190.5" x2="1005" y2="190.5" stroke="#4c4c42" stroke-width="1" stroke-dasharray="1 1"/>
<line x1="805" y1="184.5" x2="1005" y2="184.5" stroke="#4c4c42" stroke-width="1" stroke-dasharray="1 1"/>
<line x1="803" y1="177.5" x2="1005" y2="177.5" stroke="#a8a8a2" stroke-width="1" stroke-dasharray="1 1"/>
<line x1="807.5" y1="177" x2="807.5" y2="244" stroke="#4c4c42" stroke-width="1" stroke-dasharray="1 1"/>
<line x1="815.5" y1="177" x2="815.5" y2="244" stroke="#4c4c42" stroke-width="1" stroke-dasharray="1 1"/>
<line x1="824.5" y1="177" x2="824.5" y2="244" stroke="#4c4c42" stroke-width="1" stroke-dasharray="1 1"/>
<line x1="832.5" y1="177" x2="832.5" y2="246" stroke="#a8a8a2" stroke-width="1" stroke-dasharray="1 1"/>
<line x1="840.5" y1="177" x2="840.5" y2="244" stroke="#4c4c42" stroke-width="1" stroke-dasharray="1 1"/>
<line x1="849.5" y1="177" x2="849.5" y2="244" stroke="#4c4c42" stroke-width="1" stroke-dasharray="1 1"/>
<line x1="857.5" y1="177" x2="857.5" y2="244" stroke="#4c4c42" stroke-width="1" stroke-dasharray="1 1"/>
<line x1="865.5" y1="177" x2="865.5" y2="244" stroke="#4c4c42" stroke-width="1" stroke-dasharray="1 1"/>
<line x1="874.5" y1="177" x2="874.5" y2="244" stroke="#4c4c42" stroke-width="1" stroke-dasharray="1 1"/>
<line x1="882.5" y1="177" x2="882.5" y2="246" stroke="#a8a8a2" stroke-width="1" stroke-dasharray="1 1"/>
<line x1="890.5" y1="177" x2="890.5" y2="244" stroke="#4c4c42" stroke-width="1" stroke-dasharray="1 1"/>
<line x1="899.5" y1="177" x2="899.5" y2="244" stroke="#4c4c42" stroke-width="1" stroke-dasharray="1 1"/>
<line x1="907.5" y1="177" x2="907.5" y2="244" stroke="#4c4c42" stroke-width="1" stroke-dasharray="1 1"/>
<line x1="915.5" y1="177" x2="915.5" y2="244" stroke="#4c4c42" stroke-width="1" stroke-dasharray="1 1"/>
<line x1="924.5" y1="177" x2="924.5" y2="244" stroke="#4c4c42" stroke-width="1" stroke-dasharray="1 1"/>
<line x1="932.5" y1="177" x2="932.5" y2="246" stroke="#a8a8a2" stroke-width="1" stroke-dasharray="1 1"/>
<line x1="940.5" y1="177" x2="940.5" y2="244" stroke="#4c4c42" stroke-width="1" stroke-dasharray="1 1"/>
<line x1="949.5" y1="177" x2="949.5" y2="244" stroke="#4c4c42" stroke-width="1" stroke-dasharray="1 1"/>
<line x1="957.5" y1="177" x2="957.5" y2="244" stroke="#4c4c42" stroke-width="1" stroke-dasharray="1 1"/>
<line x1="965.5" y1="177" x2="965.5" y2="244" stroke="#4c4c42" stroke-width="1" stroke-dasharray="1 1"/>
<line x1="974.5" y1="177" x2="974.5" y2="244" stroke="#4c4c42" stroke-width="1" stroke-dasharray="1 1"/>
<line x1="982.5" y1="177" x2="982.5" y2="246" stroke="#a8a8a2" stroke-width="1" stroke-dasharray="1 1"/>
<line x1="990.5" y1="177" x2="990.5" y2="244" stroke="#4c4c42" stroke-width="1" stroke-dasharray="1 1"/>
<line x1="999.5" y1="177" x2="999.5" y2="244" stroke="#4c4c42" stroke-width="1" stroke-dasharray="1 1"/>
<path d="M806,194.6 807,192.6 808,191 809,190.2 810,188.5 811,193.3 812,202.3 813,207.9 814,206.2 815,203.6 816,209 817,215.4 818,216.4 819,216.6 820,217.4 821,217.9 822,217.7 823,217.2 824,216.9 825,217.7 826,217.8 827,218 828,218.3 829,218.4 830,219.2 831,218.7 832,218.7 833,219.7 834,219.5 835,220 836,222.5 837,224.6 838,225.5 839,225.7 840,225.9 841,225.7 842,225.4 843,225.4 844,225.2 845,225.7 846,226.1 847,226.2 848,226.4 849,226.4 850,226.3 851,225.9 852,226.1 853,226.1 854,225.8 855,226.1 856,225.8 857,225.6 858,226 859,226 860,225.7 861,226 862,225.8 863,225.9 864,226 865,225.4 866,226 867,226 868,225.7 869,225.9 870,226.2 871,226.6 872,226.4 873,225.7 874,225.7 875,225.9 876,225.3 877,225.2 878,225.6 879,226.1 880,225.9 881,225.6 882,225.9 883,226 884,225.4 885,225.4 886,225.9 887,225.9 888,225.8 889,226.3 890,225.9 891,225.4 892,225.7 893,225.6 894,225.5 895,226 896,226.1 897,226.2 898,226.4 899,226.4 900,226 901,225.3 902,225.7 903,226.4 904,225.8 905,225.5 906,225.9 907,226.1 908,226 909,225.5 910,225.6 911,225.9 912,226.2 913,225.9 914,225.9 915,226.2 916,225.6 917,225.9 918,226 919,225.3 920,225.4 921,225.5 922,225.9 923,226.2 924,226.2 925,225.9 926,225.7 927,226 928,225.5 929,225.2 930,225.2 931,225.5 932,225.9 933,225.7 934,225.7 935,226 936,226.1 937,226.2 938,226.2 939,225.6 940,225.1 941,225.4 942,225.8 943,226 944,224.9 945,223.5 946,224.4 947,225.4 948,225.7 949,225.7 950,225.4 951,225.5 952,225.6 953,225.5 954,225.8 955,225.8 956,225.9 957,226 958,225.7 959,225.5 960,225.9 961,225.7 962,225.4 963,225.7 964,226.2 965,223 966,219.7 967,223 968,226.1 969,226.1 970,226 971,226.1 972,223.4 973,217.3 974,211.4 975,206.2 976,202.5 977,199.2 978,196.9 979,198.7 980,201.9 981,205 982,207.6 983,208.9 984,208.9 985,206.9 986,205.7 987,207.3 988,208.8 989,209.9 990,211.7 991,214.5 992,211.9 993,204.5 994,198.6 995,197.7 996,201.9 997,204.9 998,204.4 999,205 1000,208.8 1001,210.9 1002,210.5 1003,209.6 1004,209.4 1005,209.4 1005,244 806,244Z" fill="#44eeee" shape-rendering="auto"/>
<path d="M806,195.7 807,193.8 808,192.2 809,191.4 810,189.6 811,194.4 812,203.5 813,209 814,207.4 815,204.7 816,210.2 817,216.6 818,217.6 819,217.7 820,218.5 821,219 822,218.9 823,218.4 824,218.1 825,218.9 826,219 827,219.1 828,219.4 829,219.6 830,220.3 831,219.9 832,219.9 833,220.8 834,220.6 835,221.2 836,223.6 837,225.8 838,226.6 839,226.8 840,227.1 841,226.9 842,226.5 843,226.5 844,226.4 845,226.9 846,227.3 847,227.4 848,227.5 849,227.6 850,227.5 851,227.1 852,227.3 853,227.2 854,227 855,227.3 856,226.9 857,226.8 858,227.2 859,227.2 860,226.9 861,227.2 862,227 863,227 864,227.2 865,226.6 866,227.1 867,227.2 868,226.9 869,227 870,227.3 871,227.7 872,227.6 873,226.9 874,226.9 875,227 876,226.5 877,226.3 878,226.8 879,227.2 880,227.1 881,226.8 882,227.1 883,227.1 884,226.6 885,226.5 886,227.1 887,227 888,227 889,227.4 890,227 891,226.6 892,226.8 893,226.8 894,226.6 895,227.1 896,227.3 897,227.4 898,227.6 899,227.6 900,227.1 901,226.5 902,226.9 903,227.6 904,227 905,226.6 906,227.1 907,227.3 908,227.1 909,226.7 910,226.8 911,227.1 912,227.4 913,227 914,227 915,227.4 916,226.8 917,227 918,227.1 919,226.5 920,226.6 921,226.7 922,227.1 923,227.4 924,227.3 925,227 926,226.9 927,227.2 928,226.7 929,226.4 930,226.4 931,226.7 932,227 933,226.8 934,226.8 935,227.2 936,227.2 937,227.3 938,227.4 939,226.7 940,226.3 941,226.6 942,226.9 943,227.1 944,226 945,224.7 946,225.5 947,226.5 948,226.8 949,226.9 950,226.6 951,226.6 952,226.7 953,226.7 954,226.9 955,227 956,227 957,227.2 958,226.8 959,226.7 960,227 961,226.8 962,226.6 963,226.8 964,227.3 965,224.1 966,220.9 967,224.1 968,227.3 969,227.2 970,227.2 971,227.3 972,224.5 973,218.5 974,212.6 975,207.4 976,203.7 977,200.3 978,198 979,199.9 980,203.1 981,206.1 982,208.7 983,210 984,210 985,208 986,206.9 987,208.5 988,210 989,211.1 990,212.8 991,215.7 992,213 993,205.6 994,199.7 995,198.8 996,203 997,206 998,205.5 999,206.1 1000,209.9 1001,212 1002,211.7 1003,210.7 1004,210.5 1005,210.5 1005,244 806,244Z" fill="#4aa8e8" shape-rendering="auto"/>
<path d="M806,242.7 807,242.7 808,242.7 809,242.7 810,242.7 811,242.7 812,242.7 813,242.7 814,242.7 815,242.7 816,242.7 817,242.7 818,242.7 819,242.7 820,242.7 821,242.7 822,242.7 823,242.7 824,242.7 825,242.7 826,242.7 827,242.7 828,242.7 829,242.7 830,242.7 831,242.7 832,242.7 833,242.7 834,242.7 835,242.7 836,242.7 837,242.7 838,242.7 839,242.7 840,242.7 841,242.7 842,242.7 843,242.7 844,242.7 845,242.7 846,242.7 847,242.7 848,242.7 849,242.7 850,242.7 851,242.7 852,242.7 853,242.7 854,242.7 855,242.7 856,242.7 857,242.7 858,242.7 859,242.7 860,242.7 861,242.7 862,242.7 863,242.7 864,242.7 865,242.7 866,242.7 867,242.7 868,242.7 869,242.7 870,242.7 871,242.7 872,242.7 873,242.7 874,242.7 875,242.7 876,242.7 877,242.7 878,242.7 879,242.7 880,242.7 881,242.7 882,242.7 883,242.7 884,242.7 885,242.7 886,242.7 887,242.7 888,242.7 889,242.7 890,242.7 891,242.7 892,242.7 893,242.7 894,242.7 895,242.7 896,242.7 897,242.7 898,242.7 899,242.7 900,242.7 901,242.7 902,242.7 903,242.7 904,242.7 905,242.7 906,242.7 907,242.7 908,242.7 909,242.7 910,242.7 911,242.7 912,242.7 913,242.7 914,242.7 915,242.7 916,242.7 917,242.7 918,242.7 919,242.7 920,242.7 921,242.7 922,242.7 923,242.7 924,242.7 925,242.7 926,242.7 927,242.7 928,242.7 929,242.7 930,242.7 931,242.7 932,242.7 933,242.7 934,242.7 935,242.7 936,242.7 937,242.7 938,242.7 939,242.7 940,242.7 941,242.7 942,242.7 943,242.7 944,242.7 945,242.7 946,242.7 947,242.7 948,242.7 949,242.7 950,242.7 951,242.7 952,242.7 953,242.7 954,242.7 955,242.7 956,242.7 957,242.7 958,242.7 959,242.7 960,242.7 961,242.7 962,242.7 963,242.7 964,242.7 965,242.7 966,242.7 967,242.7 968,242.7 969,242.7 970,242.7 971,242.7 972,242.7 973,242.7 974,242.7 975,242.7 976,242.7 977,242.7 978,242.7 979,242.7 980,242.7 981,242.7 982,242.7 983,242.7 984,242.7 985,242.7 986,242.7 987,242.7 988,242.7 989,242.7 990,242.7 991,242.7 992,242.7 993,242.7 994,242.7 995,242.7 996,242.7 997,242.7 998,242.7 999,242.7 1000,242.7 1001,242.7 1002,242.7 1003,242.7 1004,242.7 1005,242.7 1005,244 806,244Z" fill="#3838b8" shape-rendering="auto"/>
<g opacity="0.18"><line x1="803" y1="243.5" x2="805" y2="243.5" stroke="#a8a8a2" stroke-width="1" stroke-dasharray="1 1"/><line x1="805" y1="236.5" x2="1005" y2="236.5" stroke="#4c4c42" stroke-width="1" stroke-dasharray="1 1"/><line x1="805" y1="230.5" x2="1005" y2="230.5" stroke="#4c4c42" stroke-width="1" stroke-dasharray="1 1"/><line x1="805" y1="223.5" x2="1005" y2="223.5" stroke="#4c4c42" stroke-width="1" stroke-dasharray="1 1"/><line x1="805" y1="217.5" x2="1005" y2="217.5" stroke="#4c4c42" stroke-width="1" stroke-dasharray="1 1"/><line x1="803" y1="210.5" x2="1005" y2="210.5" stroke="#a8a8a2" stroke-width="1" stroke-dasharray="1 1"/><line x1="805" y1="203.5" x2="1005" y2="203.5" stroke="#4c4c42" stroke-width="1" stroke-dasharray="1 1"/><line x1="805" y1="197.5" x2="1005" y2="197.5" stroke="#4c4c42" stroke-width="1" stroke-dasharray="1 1"/><line x1="805" y1="190.5" x2="1005" y2="190.5" stroke="#4c4c42" stroke-width="1" stroke-dasharray="1 1"/><line x1="805" y1="184.5" x2="1005" y2="184.5" stroke="#4c4c42" stroke-width="1" stroke-dasharray="1 1"/><line x1="803" y1="177.5" x2="1005" y2="177.5" stroke="#a8a8a2" stroke-width="1" stroke-dasharray="1 1"/><line x1="807.5" y1="177" x2="807.5" y2="244" stroke="#4c4c42" stroke-width="1" stroke-dasharray="1 1"/><line x1="815.5" y1="177" x2="815.5" y2="244" stroke="#4c4c42" stroke-width="1" stroke-dasharray="1 1"/><line x1="824.5" y1="177" x2="824.5" y2="244" stroke="#4c4c42" stroke-width="1" stroke-dasharray="1 1"/><line x1="832.5" y1="177" x2="832.5" y2="246" stroke="#a8a8a2" stroke-width="1" stroke-dasharray="1 1"/><line x1="840.5" y1="177" x2="840.5" y2="244" stroke="#4c4c42" stroke-width="1" stroke-dasharray="1 1"/><line x1="849.5" y1="177" x2="849.5" y2="244" stroke="#4c4c42" stroke-width="1" stroke-dasharray="1 1"/><line x1="857.5" y1="177" x2="857.5" y2="244" stroke="#4c4c42" stroke-width="1" stroke-dasharray="1 1"/><line x1="865.5" y1="177" x2="865.5" y2="244" stroke="#4c4c42" stroke-width="1" stroke-dasharray="1 1"/><line x1="874.5" y1="177" x2="874.5" y2="244" stroke="#4c4c42" stroke-width="1" stroke-dasharray="1 1"/><line x1="882.5" y1="177" x2="882.5" y2="246" stroke="#a8a8a2" stroke-width="1" stroke-dasharray="1 1"/><line x1="890.5" y1="177" x2="890.5" y2="244" stroke="#4c4c42" stroke-width="1" stroke-dasharray="1 1"/><line x1="899.5" y1="177" x2="899.5" y2="244" stroke="#4c4c42" stroke-width="1" stroke-dasharray="1 1"/><line x1="907.5" y1="177" x2="907.5" y2="244" stroke="#4c4c42" stroke-width="1" stroke-dasharray="1 1"/><line x1="915.5" y1="177" x2="915.5" y2="244" stroke="#4c4c42" stroke-width="1" stroke-dasharray="1 1"/><line x1="924.5" y1="177" x2="924.5" y2="244" stroke="#4c4c42" stroke-width="1" stroke-dasharray="1 1"/><line x1="932.5" y1="177" x2="932.5" y2="246" stroke="#a8a8a2" stroke-width="1" stroke-dasharray="1 1"/><line x1="940.5" y1="177" x2="940.5" y2="244" stroke="#4c4c42" stroke-width="1" stroke-dasharray="1 1"/><line x1="949.5" y1="177" x2="949.5" y2="244" stroke="#4c4c42" stroke-width="1" stroke-dasharray="1 1"/><line x1="957.5" y1="177" x2="957.5" y2="244" stroke="#4c4c42" stroke-width="1" stroke-dasharray="1 1"/><line x1="965.5" y1="177" x2="965.5" y2="244" stroke="#4c4c42" stroke-width="1" stroke-dasharray="1 1"/><line x1="974.5" y1="177" x2="974.5" y2="244" stroke="#4c4c42" stroke-width="1" stroke-dasharray="1 1"/><line x1="982.5" y1="177" x2="982.5" y2="246" stroke="#a8a8a2" stroke-width="1" stroke-dasharray="1 1"/><line x1="990.5" y1="177" x2="990.5" y2="244" stroke="#4c4c42" stroke-width="1" stroke-dasharray="1 1"/><line x1="999.5" y1="177" x2="999.5" y2="244" stroke="#4c4c42" stroke-width="1" stroke-dasharray="1 1"/></g>
<path d="M802,174 L808,174 L805,168Z" fill="#fff" shape-rendering="auto"/>
<path d="M1007,240.5 L1007,246.5 L1013,243.5Z" fill="#fff" shape-rendering="auto"/>
<text x="787" y="247" font-size="10" fill="#c8c8c8" text-anchor="end"  xml:space="preserve">0</text>
<text x="799" y="214" font-size="10" fill="#c8c8c8" text-anchor="end"  xml:space="preserve">10 k</text>
<text x="799" y="181" font-size="10" fill="#c8c8c8" text-anchor="end"  xml:space="preserve">20 k</text>
<text x="832.6" y="256" font-size="10" fill="#c8c8c8" text-anchor="middle"  xml:space="preserve">18:00</text>
<text x="882.6" y="256" font-size="10" fill="#c8c8c8" text-anchor="middle"  xml:space="preserve">00:00</text>
<text x="932.6" y="256" font-size="10" fill="#c8c8c8" text-anchor="middle"  xml:space="preserve">06:00</text>
<text x="982.6" y="256" font-size="10" fill="#c8c8c8" text-anchor="middle"  xml:space="preserve">12:00</text>
<text x="769.5" y="173" font-size="11.67" fill="#c8c8c8" text-anchor="start"  xml:space="preserve">Context switches and forks  (1day)</text>
<g transform="translate(756,209.2) rotate(-90)"><text x="0" y="0" font-size="10" fill="#c8c8c8" text-anchor="middle"  xml:space="preserve">CS &amp; forks/s</text></g>
<g transform="translate(1023.5,157) rotate(90)"><text x="0" y="0" font-size="8.3" fill="#4a4a4a" text-anchor="start"  xml:space="preserve">RRDTOOL / TOBI OETIKER</text></g>
<rect x="754" y="264" width="8" height="8" fill="#777"/><rect x="755" y="265" width="6" height="6" fill="#44aaee"/>
<text x="767.5" y="271" font-size="10" fill="#c8c8c8" text-anchor="start"  xml:space="preserve">Context switches</text>
<text x="907.4" y="271" font-size="10" fill="#c8c8c8" text-anchor="start"  xml:space="preserve">Current:  10407</text>
<rect x="754" y="276" width="8" height="8" fill="#777"/><rect x="755" y="277" width="6" height="6" fill="#4444ee"/>
<text x="767.5" y="283" font-size="10" fill="#c8c8c8" text-anchor="start"  xml:space="preserve">Forks</text>
<text x="907.4" y="283" font-size="10" fill="#c8c8c8" text-anchor="start"  xml:space="preserve">Current:      4</text>
</svg>
<svg class="a" style="left:740px;top:292px" width="296" height="159" viewBox="740 292 296 159" font-family='"Liberation Mono",monospace' shape-rendering="crispEdges">
<rect x="740" y="292" width="296" height="159" fill="#404040"/>
<rect x="743" y="295" width="290" height="153" fill="#121212"/>
<rect x="740" y="441.5" width="296" height="9.5" fill="#3a3a3a"/>
<rect x="740" y="441.5" width="296" height="2.5" fill="#444"/>
<rect x="805" y="317" width="200" height="67" fill="#000"/>
<line x1="803" y1="383.5" x2="805" y2="383.5" stroke="#a8a8a2" stroke-width="1" stroke-dasharray="1 1"/>
<line x1="805" y1="376.5" x2="1005" y2="376.5" stroke="#4c4c42" stroke-width="1" stroke-dasharray="1 1"/>
<line x1="805" y1="370.5" x2="1005" y2="370.5" stroke="#4c4c42" stroke-width="1" stroke-dasharray="1 1"/>
<line x1="805" y1="363.5" x2="1005" y2="363.5" stroke="#4c4c42" stroke-width="1" stroke-dasharray="1 1"/>
<line x1="805" y1="357.5" x2="1005" y2="357.5" stroke="#4c4c42" stroke-width="1" stroke-dasharray="1 1"/>
<line x1="803" y1="350.5" x2="1005" y2="350.5" stroke="#a8a8a2" stroke-width="1" stroke-dasharray="1 1"/>
<line x1="805" y1="343.5" x2="1005" y2="343.5" stroke="#4c4c42" stroke-width="1" stroke-dasharray="1 1"/>
<line x1="805" y1="337.5" x2="1005" y2="337.5" stroke="#4c4c42" stroke-width="1" stroke-dasharray="1 1"/>
<line x1="805" y1="330.5" x2="1005" y2="330.5" stroke="#4c4c42" stroke-width="1" stroke-dasharray="1 1"/>
<line x1="805" y1="324.5" x2="1005" y2="324.5" stroke="#4c4c42" stroke-width="1" stroke-dasharray="1 1"/>
<line x1="803" y1="317.5" x2="1005" y2="317.5" stroke="#a8a8a2" stroke-width="1" stroke-dasharray="1 1"/>
<line x1="807.5" y1="317" x2="807.5" y2="384" stroke="#4c4c42" stroke-width="1" stroke-dasharray="1 1"/>
<line x1="815.5" y1="317" x2="815.5" y2="384" stroke="#4c4c42" stroke-width="1" stroke-dasharray="1 1"/>
<line x1="824.5" y1="317" x2="824.5" y2="384" stroke="#4c4c42" stroke-width="1" stroke-dasharray="1 1"/>
<line x1="832.5" y1="317" x2="832.5" y2="386" stroke="#a8a8a2" stroke-width="1" stroke-dasharray="1 1"/>
<line x1="840.5" y1="317" x2="840.5" y2="384" stroke="#4c4c42" stroke-width="1" stroke-dasharray="1 1"/>
<line x1="849.5" y1="317" x2="849.5" y2="384" stroke="#4c4c42" stroke-width="1" stroke-dasharray="1 1"/>
<line x1="857.5" y1="317" x2="857.5" y2="384" stroke="#4c4c42" stroke-width="1" stroke-dasharray="1 1"/>
<line x1="865.5" y1="317" x2="865.5" y2="384" stroke="#4c4c42" stroke-width="1" stroke-dasharray="1 1"/>
<line x1="874.5" y1="317" x2="874.5" y2="384" stroke="#4c4c42" stroke-width="1" stroke-dasharray="1 1"/>
<line x1="882.5" y1="317" x2="882.5" y2="386" stroke="#a8a8a2" stroke-width="1" stroke-dasharray="1 1"/>
<line x1="890.5" y1="317" x2="890.5" y2="384" stroke="#4c4c42" stroke-width="1" stroke-dasharray="1 1"/>
<line x1="899.5" y1="317" x2="899.5" y2="384" stroke="#4c4c42" stroke-width="1" stroke-dasharray="1 1"/>
<line x1="907.5" y1="317" x2="907.5" y2="384" stroke="#4c4c42" stroke-width="1" stroke-dasharray="1 1"/>
<line x1="915.5" y1="317" x2="915.5" y2="384" stroke="#4c4c42" stroke-width="1" stroke-dasharray="1 1"/>
<line x1="924.5" y1="317" x2="924.5" y2="384" stroke="#4c4c42" stroke-width="1" stroke-dasharray="1 1"/>
<line x1="932.5" y1="317" x2="932.5" y2="386" stroke="#a8a8a2" stroke-width="1" stroke-dasharray="1 1"/>
<line x1="940.5" y1="317" x2="940.5" y2="384" stroke="#4c4c42" stroke-width="1" stroke-dasharray="1 1"/>
<line x1="949.5" y1="317" x2="949.5" y2="384" stroke="#4c4c42" stroke-width="1" stroke-dasharray="1 1"/>
<line x1="957.5" y1="317" x2="957.5" y2="384" stroke="#4c4c42" stroke-width="1" stroke-dasharray="1 1"/>
<line x1="965.5" y1="317" x2="965.5" y2="384" stroke="#4c4c42" stroke-width="1" stroke-dasharray="1 1"/>
<line x1="974.5" y1="317" x2="974.5" y2="384" stroke="#4c4c42" stroke-width="1" stroke-dasharray="1 1"/>
<line x1="982.5" y1="317" x2="982.5" y2="386" stroke="#a8a8a2" stroke-width="1" stroke-dasharray="1 1"/>
<line x1="990.5" y1="317" x2="990.5" y2="384" stroke="#4c4c42" stroke-width="1" stroke-dasharray="1 1"/>
<line x1="999.5" y1="317" x2="999.5" y2="384" stroke="#4c4c42" stroke-width="1" stroke-dasharray="1 1"/>
<path d="M806,342.4 807,342.4 808,342.4 809,342.4 810,342.4 811,342.4 812,342.4 813,342.4 814,342.4 815,342.4 816,342.4 817,342.4 818,342.4 819,340 820,337.7 821,333.8 822,328.6 823,324.8 824,322.5 825,322.3 826,322.3 827,322.3 828,322.3 829,322.3 830,322.3 831,322.3 832,322.3 833,322.3 834,322.2 835,322.2 836,322.2 837,322.2 838,322.2 839,322.2 840,322.2 841,322.2 842,322.2 843,322.2 844,322.2 845,322.2 846,322.2 847,322.2 848,322.2 849,322.2 850,322.2 851,322.2 852,322.2 853,322.2 854,322.2 855,322.2 856,322.2 857,322.1 858,322.1 859,322.1 860,322.1 861,322.1 862,322.1 863,322.1 864,322.1 865,322.1 866,322.1 867,322.1 868,322.1 869,322.1 870,322.1 871,322.1 872,322.1 873,322.1 874,322.1 875,322.1 876,322.1 877,322.1 878,322.1 879,322 880,322 881,322 882,322 883,322 884,322 885,322 886,322 887,322 888,322 889,322 890,322 891,322 892,322 893,322 894,322 895,322 896,322 897,322 898,322 899,322 900,322 901,322 902,322 903,322 904,322 905,322 906,322 907,322 908,322 909,322 910,322 911,322 912,322.1 913,322.1 914,322.1 915,322.1 916,322.1 917,322.1 918,322.1 919,322.1 920,322.1 921,322.1 922,322.1 923,322.1 924,322.1 925,322.1 926,322.2 927,322.2 928,322.2 929,322.2 930,322.2 931,322.2 932,322.2 933,322.2 934,322.2 935,322.2 936,322.2 937,322.2 938,322.2 939,322.2 940,322.3 941,322.3 942,322.3 943,322.3 944,322.3 945,322.5 946,322.8 947,322.9 948,322.9 949,322.9 950,322.9 951,322.9 952,322.9 953,322.9 954,322.9 955,322.9 956,322.9 957,322.9 958,322.9 959,322.9 960,322.9 961,322.9 962,322.9 963,322.9 964,322.9 965,324.7 966,328.1 967,331.5 968,333.3 969,333.7 970,334 971,334.3 972,334.7 973,335 974,335.5 975,336.1 976,336.8 977,337.5 978,337.8 979,337.8 980,337.8 981,337.8 982,337.8 983,337.8 984,337.8 985,337.8 986,337.8 987,337.8 988,337.8 989,337.8 990,337.7 991,337.6 992,337.5 993,337.3 994,337.2 995,337.2 996,337.2 997,337.2 998,337.2 999,337.3 1000,337.3 1001,337.3 1002,337.3 1003,337.4 1004,337.4 1005,337.4 1005,384 806,384Z" fill="#4444ee" shape-rendering="auto"/>
<path d="M806,348.7 807,348.7 808,348.7 809,348.7 810,348.7 811,348.7 812,348.7 813,348.7 814,348.7 815,348.7 816,348.2 817,347.2 818,346.3 819,345.3 820,344.3 821,343.4 822,342.4 823,342.4 824,342.5 825,342.5 826,342.5 827,342.5 828,342.6 829,342.6 830,342.6 831,342.6 832,342.7 833,342.7 834,342.7 835,342.7 836,342.5 837,342 838,341.9 839,342.3 840,342.6 841,342.9 842,343.1 843,343.1 844,343.2 845,343.2 846,343.2 847,343.3 848,343.3 849,343.4 850,343.4 851,343.4 852,343.5 853,343.5 854,343.5 855,343.6 856,343.6 857,343.6 858,343.7 859,343.7 860,343.7 861,343.8 862,343.8 863,343.8 864,343.8 865,343.8 866,343.8 867,343.9 868,343.9 869,343.9 870,343.9 871,343.9 872,343.9 873,344 874,344 875,344 876,344 877,344 878,344 879,344.1 880,344.1 881,344.1 882,344.1 883,344.1 884,344.1 885,344.2 886,344.2 887,344.2 888,344.2 889,344.2 890,344.2 891,344.3 892,344.3 893,344.3 894,344.3 895,344.3 896,344.3 897,344.4 898,344.4 899,344.4 900,344.4 901,344.4 902,344.4 903,344.4 904,344.4 905,344.4 906,344.4 907,344.4 908,344.4 909,344.4 910,344.4 911,344.4 912,344.4 913,344.4 914,344.4 915,344.4 916,344.4 917,344.4 918,344.4 919,344.4 920,344.4 921,344.4 922,344.4 923,344.4 924,344.4 925,344.4 926,344.4 927,344.4 928,344.4 929,344.4 930,344.4 931,344.4 932,344.4 933,344.4 934,344.4 935,344.4 936,344.4 937,344.4 938,344.4 939,344.4 940,344.4 941,344.4 942,344.4 943,344.4 944,344.4 945,345 946,346.1 947,347.3 948,348.4 949,349 950,349 951,349 952,349 953,349 954,349 955,349 956,349 957,349 958,349 959,349 960,349 961,349 962,349 963,349 964,349 965,349 966,349 967,349 968,349 969,349 970,349 971,349 972,349 973,349 974,349 975,348.8 976,348.3 977,348 978,348 979,348 980,348 981,347.9 982,347.9 983,347.9 984,347.9 985,347.9 986,347.9 987,347.8 988,347.8 989,347.8 990,347.8 991,347.8 992,347.7 993,347.7 994,347.7 995,347.7 996,347.7 997,347.8 998,347.8 999,347.8 1000,347.9 1001,347.9 1002,347.9 1003,348 1004,348 1005,348 1005,384 806,384Z" fill="#eeee44" shape-rendering="auto"/>
<g opacity="0.45"><line x1="803" y1="383.5" x2="805" y2="383.5" stroke="#a8a8a2" stroke-width="1" stroke-dasharray="1 1"/><line x1="805" y1="376.5" x2="1005" y2="376.5" stroke="#4c4c42" stroke-width="1" stroke-dasharray="1 1"/><line x1="805" y1="370.5" x2="1005" y2="370.5" stroke="#4c4c42" stroke-width="1" stroke-dasharray="1 1"/><line x1="805" y1="363.5" x2="1005" y2="363.5" stroke="#4c4c42" stroke-width="1" stroke-dasharray="1 1"/><line x1="805" y1="357.5" x2="1005" y2="357.5" stroke="#4c4c42" stroke-width="1" stroke-dasharray="1 1"/><line x1="803" y1="350.5" x2="1005" y2="350.5" stroke="#a8a8a2" stroke-width="1" stroke-dasharray="1 1"/><line x1="805" y1="343.5" x2="1005" y2="343.5" stroke="#4c4c42" stroke-width="1" stroke-dasharray="1 1"/><line x1="805" y1="337.5" x2="1005" y2="337.5" stroke="#4c4c42" stroke-width="1" stroke-dasharray="1 1"/><line x1="805" y1="330.5" x2="1005" y2="330.5" stroke="#4c4c42" stroke-width="1" stroke-dasharray="1 1"/><line x1="805" y1="324.5" x2="1005" y2="324.5" stroke="#4c4c42" stroke-width="1" stroke-dasharray="1 1"/><line x1="803" y1="317.5" x2="1005" y2="317.5" stroke="#a8a8a2" stroke-width="1" stroke-dasharray="1 1"/><line x1="807.5" y1="317" x2="807.5" y2="384" stroke="#4c4c42" stroke-width="1" stroke-dasharray="1 1"/><line x1="815.5" y1="317" x2="815.5" y2="384" stroke="#4c4c42" stroke-width="1" stroke-dasharray="1 1"/><line x1="824.5" y1="317" x2="824.5" y2="384" stroke="#4c4c42" stroke-width="1" stroke-dasharray="1 1"/><line x1="832.5" y1="317" x2="832.5" y2="386" stroke="#a8a8a2" stroke-width="1" stroke-dasharray="1 1"/><line x1="840.5" y1="317" x2="840.5" y2="384" stroke="#4c4c42" stroke-width="1" stroke-dasharray="1 1"/><line x1="849.5" y1="317" x2="849.5" y2="384" stroke="#4c4c42" stroke-width="1" stroke-dasharray="1 1"/><line x1="857.5" y1="317" x2="857.5" y2="384" stroke="#4c4c42" stroke-width="1" stroke-dasharray="1 1"/><line x1="865.5" y1="317" x2="865.5" y2="384" stroke="#4c4c42" stroke-width="1" stroke-dasharray="1 1"/><line x1="874.5" y1="317" x2="874.5" y2="384" stroke="#4c4c42" stroke-width="1" stroke-dasharray="1 1"/><line x1="882.5" y1="317" x2="882.5" y2="386" stroke="#a8a8a2" stroke-width="1" stroke-dasharray="1 1"/><line x1="890.5" y1="317" x2="890.5" y2="384" stroke="#4c4c42" stroke-width="1" stroke-dasharray="1 1"/><line x1="899.5" y1="317" x2="899.5" y2="384" stroke="#4c4c42" stroke-width="1" stroke-dasharray="1 1"/><line x1="907.5" y1="317" x2="907.5" y2="384" stroke="#4c4c42" stroke-width="1" stroke-dasharray="1 1"/><line x1="915.5" y1="317" x2="915.5" y2="384" stroke="#4c4c42" stroke-width="1" stroke-dasharray="1 1"/><line x1="924.5" y1="317" x2="924.5" y2="384" stroke="#4c4c42" stroke-width="1" stroke-dasharray="1 1"/><line x1="932.5" y1="317" x2="932.5" y2="386" stroke="#a8a8a2" stroke-width="1" stroke-dasharray="1 1"/><line x1="940.5" y1="317" x2="940.5" y2="384" stroke="#4c4c42" stroke-width="1" stroke-dasharray="1 1"/><line x1="949.5" y1="317" x2="949.5" y2="384" stroke="#4c4c42" stroke-width="1" stroke-dasharray="1 1"/><line x1="957.5" y1="317" x2="957.5" y2="384" stroke="#4c4c42" stroke-width="1" stroke-dasharray="1 1"/><line x1="965.5" y1="317" x2="965.5" y2="384" stroke="#4c4c42" stroke-width="1" stroke-dasharray="1 1"/><line x1="974.5" y1="317" x2="974.5" y2="384" stroke="#4c4c42" stroke-width="1" stroke-dasharray="1 1"/><line x1="982.5" y1="317" x2="982.5" y2="386" stroke="#a8a8a2" stroke-width="1" stroke-dasharray="1 1"/><line x1="990.5" y1="317" x2="990.5" y2="384" stroke="#4c4c42" stroke-width="1" stroke-dasharray="1 1"/><line x1="999.5" y1="317" x2="999.5" y2="384" stroke="#4c4c42" stroke-width="1" stroke-dasharray="1 1"/></g>
<path d="M802,314 L808,314 L805,308Z" fill="#fff" shape-rendering="auto"/>
<path d="M1007,380.5 L1007,386.5 L1013,383.5Z" fill="#fff" shape-rendering="auto"/>
<text x="799" y="387" font-size="10" fill="#c8c8c8" text-anchor="end"  xml:space="preserve">0</text>
<text x="799" y="354" font-size="10" fill="#c8c8c8" text-anchor="end"  xml:space="preserve">50</text>
<text x="799" y="321" font-size="10" fill="#c8c8c8" text-anchor="end"  xml:space="preserve">100</text>
<text x="832.6" y="396" font-size="10" fill="#c8c8c8" text-anchor="middle"  xml:space="preserve">18:00</text>
<text x="882.6" y="396" font-size="10" fill="#c8c8c8" text-anchor="middle"  xml:space="preserve">00:00</text>
<text x="932.6" y="396" font-size="10" fill="#c8c8c8" text-anchor="middle"  xml:space="preserve">06:00</text>
<text x="982.6" y="396" font-size="10" fill="#c8c8c8" text-anchor="middle"  xml:space="preserve">12:00</text>
<text x="829.6" y="313" font-size="11.67" fill="#c8c8c8" text-anchor="start"  xml:space="preserve">VFS usage  (1day)</text>
<g transform="translate(756,350) rotate(-90)"><text x="0" y="0" font-size="10" fill="#c8c8c8" text-anchor="middle"  xml:space="preserve">Percent (%)</text></g>
<g transform="translate(1023,300) rotate(90)"><text x="0" y="0" font-size="8.3" fill="#4a4a4a" text-anchor="start"  xml:space="preserve">RRDTOOL / TOBI OETIKER</text></g>
<rect x="754" y="404" width="8" height="8" fill="#777"/><rect x="755" y="405" width="6" height="6" fill="#4444ee"/>
<text x="767.5" y="411" font-size="10" fill="#c8c8c8" text-anchor="start"  xml:space="preserve">inode</text>
<text x="907.4" y="411" font-size="10" fill="#c8c8c8" text-anchor="start"  xml:space="preserve">Current:  70.6%</text>
<rect x="754" y="416" width="8" height="8" fill="#777"/><rect x="755" y="417" width="6" height="6" fill="#eeee44"/>
<text x="767.5" y="423" font-size="10" fill="#c8c8c8" text-anchor="start"  xml:space="preserve">dentry</text>
<text x="907.4" y="423" font-size="10" fill="#c8c8c8" text-anchor="start"  xml:space="preserve">Current:  54.0%</text>
<rect x="754" y="428" width="8" height="8" fill="#777"/><rect x="755" y="429" width="6" height="6" fill="#ee44ee"/>
<text x="767.5" y="435" font-size="10" fill="#c8c8c8" text-anchor="start"  xml:space="preserve">file</text>
<text x="907.4" y="435" font-size="10" fill="#c8c8c8" text-anchor="start"  xml:space="preserve">Current:   0.0%</text>
</svg>

<!-- PANEL 2 -->
<div class="panel" style="left:181px;top:476px;width:860px;height:300px"></div>
<div class="tbar" style="left:187px;top:482px;width:848px;height:19px"></div>
<div class="ttl" style="left:197px;top:482px">Kernel usage per processor</div>
<svg class="a" style="left:187px;top:507px" width="421" height="300" viewBox="187 507 421 300" font-family='"Liberation Mono",monospace' shape-rendering="crispEdges">
<rect x="187" y="507" width="421" height="300" fill="#404040"/>
<rect x="190" y="510" width="415" height="294" fill="#121212"/>
<rect x="253" y="533" width="324" height="151" fill="#000"/>
<path d="M253,668.6 254,660.7 255,655.3 256,651.8 257,650 258,652.4 259,654.1 260,654.4 261,652.8 262,651.4 263,653.1 264,656.7 265,660.8 266,666.2 267,669.5 268,665.9 269,661 270,662.8 271,668.9 272,672.6 273,673.9 274,673.9 275,674 276,674.5 277,674.2 278,674.4 279,674 280,673.5 281,672.9 282,672.8 283,673 284,673 285,673 286,673 287,673.5 288,672.7 289,671.7 290,671.9 291,672.3 292,672.9 293,673.6 294,673.6 295,673.8 296,673.1 297,672.6 298,672.5 299,672.4 300,672.5 301,672.3 302,674.1 303,675.3 304,674.6 305,675.4 306,677 307,676.5 308,674.6 309,672.9 310,671.9 311,672.4 312,673.4 313,673.3 314,672 315,671.4 316,672.6 317,673.3 318,673.4 319,673.6 320,672.7 321,672.5 322,672.8 323,672.4 324,673 325,672.6 326,672.7 327,672.8 328,672.8 329,673.1 330,673 331,673.2 332,672.1 333,671.4 334,672.3 335,672.2 336,672.3 337,673 338,672.1 339,671.8 340,672.9 341,672.4 342,672.2 343,673.2 344,672.5 345,672.4 346,673 347,673.4 348,673.7 349,673 350,672.8 351,672.7 352,672.5 353,672.8 354,671.9 355,671.9 356,672.4 357,671.9 358,672.5 359,673.5 360,672.4 361,671.5 362,672.4 363,673.3 364,672.6 365,671.6 366,672.3 367,672.3 368,671.4 369,671.9 370,672.5 371,673.2 372,673.8 373,672.5 374,672.3 375,672.6 376,672.6 377,672.4 378,672 379,672.7 380,673.3 381,672.7 382,672.9 383,673.6 384,672.9 385,672 386,671.9 387,672.7 388,672.3 389,672.4 390,673.7 391,673.6 392,673 393,673.3 394,673.7 395,673.2 396,672.7 397,673 398,673.3 399,672.2 400,671.4 401,671.7 402,672.1 403,672.2 404,673 405,673.8 406,673.9 407,672.7 408,671.7 409,671.7 410,672.6 411,673.1 412,672.4 413,672.3 414,672.5 415,672.2 416,672.5 417,673.1 418,672.2 419,671.7 420,671.7 421,672 422,671.9 423,671.6 424,672.2 425,672.5 426,671.8 427,671.5 428,672.2 429,672.3 430,671.7 431,672 432,672.3 433,672.6 434,672.6 435,672.3 436,673 437,673 438,671.7 439,671.4 440,671.8 441,672.4 442,672.4 443,672.2 444,672.6 445,672.2 446,672.7 447,672.8 448,672.9 449,673.1 450,672.5 451,673 452,672.7 453,672.3 454,672.4 455,671.9 456,672.4 457,673.6 458,673.6 459,672.6 460,672.8 461,673.5 462,672.5 463,671.8 464,672.5 465,672.1 466,672.3 467,672.6 468,672.8 469,673.1 470,672.3 471,671.6 472,671.5 473,672.2 474,672.6 475,672.7 476,673.4 477,673.1 478,672.1 479,671.6 480,671.8 481,671.7 482,672.3 483,673.4 484,673.1 485,673 486,673.3 487,673.1 488,672.5 489,672.4 490,672.9 491,672.4 492,671.5 493,672 494,673.3 495,673.8 496,672.7 497,672.7 498,672.9 499,672.2 500,672.8 501,672.5 502,672.9 503,673.8 504,673.2 505,673.3 506,672.8 507,672.5 508,673.5 509,673.7 510,673.1 511,672.5 512,672.5 513,672.2 514,672 515,671.5 516,671.7 517,672.8 518,673.1 519,673.1 520,673.7 521,673.3 522,672.3 523,672.7 524,673.4 525,672.6 526,670.9 527,668.7 528,665.7 529,664 530,665 531,665.4 532,662.7 533,660.5 534,657.4 535,655.6 536,660.7 537,665 538,666.2 539,666 540,665.3 541,666.3 542,667.3 543,667.4 544,666.2 545,665.8 546,665.4 547,665.2 548,664.3 549,663.2 550,664.6 551,665.9 552,667.8 553,666.9 554,663.2 555,660.6 556,659.6 557,658.5 558,657.7 559,656.2 560,656.1 561,660.8 562,664.9 563,666.2 564,665.3 565,663.1 566,663.4 567,666.7 568,666.8 569,666.2 570,665.7 571,665.8 572,667.8 573,666.5 574,665.4 575,666.6 576,667.4 577,667.4 577,684 253,684Z" fill="#4444ee" shape-rendering="auto"/>
<path d="M253,674.5 254,673.4 255,672.4 256,672 257,672.4 258,672.8 259,673.2 260,673.7 261,674.2 262,674.6 263,674.9 264,675.3 265,675.6 266,675.8 267,676 268,676.2 269,676.3 270,676.5 271,676.5 272,676.4 273,676.3 274,676.4 275,676.5 276,676.6 277,676.7 278,676.8 279,677 280,677.1 281,677.2 282,677.3 283,677.4 284,677.4 285,677.5 286,677.6 287,677.9 288,678.1 289,678.2 290,678.2 291,678.2 292,678.3 293,678.5 294,678.7 295,678.7 296,678.5 297,678.4 298,678.5 299,678.9 300,679.2 301,679.3 302,679.2 303,679 304,679.1 305,679.4 306,679.7 307,679.2 308,677.9 309,676.5 310,675.9 311,676 312,676.1 313,676.2 314,676.2 315,676.1 316,676.1 317,675.9 318,675.8 319,675.9 320,676.1 321,676.4 322,676.5 323,676.5 324,676.5 325,676.3 326,676.1 327,675.8 328,675.7 329,675.9 330,676 331,676.1 332,676.2 333,676.4 334,676.3 335,676 336,675.7 337,675.6 338,675.6 339,675.6 340,675.8 341,676 342,676.3 343,676.4 344,676.3 345,676.2 346,676.2 347,676.2 348,676.3 349,676.4 350,676.3 351,676.2 352,676.2 353,676.1 354,676 355,676 356,676.1 357,676.3 358,676.3 359,676.1 360,676 361,676 362,676.2 363,676.4 364,676.4 365,676.4 366,676.4 367,676.2 368,676.1 369,675.9 370,675.8 371,676 372,676.1 373,676.1 374,676.1 375,676.1 376,676.1 377,676 378,676 379,676 380,676 381,676.1 382,676.1 383,676.1 384,676.1 385,676.2 386,676.3 387,676.4 388,676.4 389,676.2 390,676 391,675.8 392,675.7 393,675.7 394,675.6 395,675.6 396,675.6 397,675.7 398,675.8 399,675.9 400,675.9 401,676 402,676.1 403,676.2 404,676.2 405,676.2 406,676.1 407,676 408,675.9 409,675.9 410,675.9 411,675.9 412,676 413,676.1 414,676.3 415,676.4 416,676.3 417,676.3 418,676.3 419,676.2 420,676.2 421,676.2 422,676.1 423,676.1 424,676 425,675.9 426,675.8 427,675.8 428,675.9 429,676 430,676.1 431,676.3 432,676.4 433,676.4 434,676.1 435,675.9 436,675.8 437,675.9 438,676.1 439,676.1 440,676.1 441,676 442,676.1 443,676.2 444,676.3 445,676.3 446,676.2 447,676.1 448,676.1 449,676.1 450,676.1 451,676.1 452,676 453,675.9 454,675.9 455,676.1 456,676.3 457,676.3 458,676.2 459,676.1 460,676.1 461,676.2 462,676.3 463,676.3 464,676.1 465,676 466,676 467,676.2 468,676.4 469,676.4 470,676.4 471,676.3 472,676.2 473,676.2 474,676.2 475,676.1 476,676.1 477,676 478,676 479,676.2 480,676.4 481,676.4 482,676.3 483,676.1 484,676.1 485,676.2 486,676.3 487,676.3 488,676.3 489,676.3 490,676.2 491,676.2 492,676.1 493,676 494,675.9 495,675.7 496,675.7 497,675.9 498,676 499,676 500,675.9 501,675.7 502,675.8 503,676 504,676.2 505,676.2 506,676 507,675.8 508,675.8 509,675.9 510,676.1 511,676.2 512,676.3 513,676.3 514,676.2 515,676.1 516,675.9 517,675.8 518,675.8 519,675.7 520,675.8 521,676.1 522,676.4 523,676.5 524,676.4 525,676.3 526,676 527,675.4 528,674.9 529,674.6 530,674.6 531,674.6 532,674.6 533,674.7 534,674.8 535,675 536,675.3 537,675.5 538,675.8 539,676.1 540,676.3 541,676.3 542,676 543,675.7 544,675.4 545,675.1 546,674.8 547,674.8 548,674.9 549,675 550,675.2 551,675.5 552,675.7 553,675.8 554,675.7 555,675.7 556,675.6 557,675.5 558,675.3 559,675.2 560,675.1 561,675 562,675 563,675.1 564,675.1 565,675.2 566,675.3 567,675.4 568,675.5 569,675.7 570,675.9 571,676 572,675.9 573,675.9 574,675.9 575,676 576,676 577,676 577,684 253,684Z" fill="#44eeee" shape-rendering="auto"/>
<path d="M253,676.1 254,676.1 255,676.2 256,676.3 257,676.3 258,676.4 259,676.5 260,676.5 261,676.6 262,676.7 263,676.7 264,676.8 265,676.8 266,676.9 267,677 268,677 269,677.1 270,677.2 271,677.2 272,677.3 273,677.4 274,677.4 275,677.5 276,677.6 277,677.6 278,677.7 279,677.7 280,677.8 281,677.9 282,677.9 283,678 284,678.1 285,678.1 286,678.2 287,678.3 288,678.3 289,678.4 290,678.4 291,678.5 292,678.6 293,678.6 294,678.7 295,678.8 296,678.8 297,678.9 298,679 299,679 300,679.1 301,679.1 302,679.2 303,679.3 304,679.3 305,679.4 306,679.5 307,678.6 308,676.9 309,676 310,676 311,676 312,676 313,676 314,676 315,676 316,676 317,676 318,676 319,676 320,676 321,676 322,676 323,676 324,676 325,676 326,676 327,676 328,676 329,676 330,676 331,676 332,676 333,676 334,676 335,676 336,676 337,676 338,676 339,676 340,676 341,676 342,676 343,676 344,676 345,676 346,676 347,676 348,676 349,676 350,676 351,676 352,676 353,676 354,676 355,676 356,676 357,676 358,676 359,676 360,676 361,676 362,676 363,676 364,676 365,676 366,676 367,676 368,676 369,676 370,676 371,676 372,676 373,676 374,676 375,676 376,676 377,676 378,676 379,676 380,676 381,676 382,676 383,676 384,676 385,676 386,676 387,676 388,676 389,676 390,676 391,676 392,676 393,676 394,676 395,676 396,676 397,676 398,676 399,676 400,676 401,676 402,676 403,676 404,676 405,676 406,676 407,676 408,676 409,676 410,676 411,676 412,676 413,676 414,676 415,676 416,676 417,676 418,676 419,676 420,676 421,676 422,676 423,676 424,676 425,676 426,676 427,676 428,676 429,676 430,676 431,676 432,676 433,676 434,676 435,676 436,676 437,676 438,676 439,676 440,676 441,676 442,676 443,676 444,676 445,676 446,676 447,676 448,676 449,676 450,676 451,676 452,676 453,676 454,676 455,676 456,676 457,676 458,676 459,676 460,676 461,676 462,676 463,676 464,676 465,676 466,676 467,676 468,676 469,676 470,676 471,676 472,676 473,676 474,676 475,676 476,676 477,676 478,676 479,676 480,676 481,676 482,676 483,676 484,676 485,676 486,676 487,676 488,676 489,676 490,676 491,676 492,676 493,676 494,676 495,676 496,676 497,676 498,676 499,676 500,676 501,676 502,676 503,676 504,676 505,676 506,676 507,676 508,676 509,676 510,676 511,676 512,676 513,676 514,676 515,676 516,676 517,676 518,676 519,676 520,676 521,676 522,676 523,676 524,676 525,676 526,676 527,676 528,676 529,676 530,676 531,676 532,676 533,676 534,676 535,676 536,676 537,676 538,676 539,676 540,676 541,676 542,676 543,676 544,676 545,676 546,676 547,676 548,676 549,676 550,676 551,676 552,676 553,676 554,676 555,676 556,676 557,676 558,676 559,676 560,676 561,676 562,676 563,676 564,676 565,676 566,676 567,676 568,676 569,676 570,676 571,676 572,676 573,676 574,676 575,676 576,676 577,676 577,684 253,684Z" fill="#e8944a" shape-rendering="auto"/>
<path d="M253,678 254,678.1 255,678.1 256,678.1 257,678.2 258,678.2 259,678.3 260,678.3 261,678.3 262,678.4 263,678.4 264,678.4 265,678.5 266,678.5 267,678.6 268,678.6 269,678.6 270,678.7 271,678.7 272,678.8 273,678.8 274,678.8 275,678.9 276,678.9 277,679 278,679 279,679 280,679.1 281,679.1 282,679.1 283,679.2 284,679.2 285,679.3 286,679.3 287,679.3 288,679.4 289,679.4 290,679.5 291,679.5 292,679.5 293,679.6 294,679.6 295,679.7 296,679.7 297,679.7 298,679.8 299,679.8 300,679.8 301,679.9 302,679.9 303,680 304,680 305,680 306,680.1 307,679.6 308,678.5 309,678 310,678 311,678 312,678 313,678 314,678 315,678 316,678 317,678 318,678 319,678 320,678 321,678 322,678 323,678 324,678 325,678 326,678 327,678 328,678 329,678 330,678 331,678 332,678 333,678 334,678 335,678 336,678 337,678 338,678 339,678 340,678 341,678 342,678 343,678 344,678 345,678 346,678 347,678 348,678 349,678 350,678 351,678 352,678 353,678 354,678 355,678 356,678 357,678 358,678 359,678 360,678 361,678 362,678 363,678 364,678 365,678 366,678 367,678 368,678 369,678 370,678 371,678 372,678 373,678 374,678 375,678 376,678 377,678 378,678 379,678 380,678 381,678 382,678 383,678 384,678 385,678 386,678 387,678 388,678 389,678 390,678 391,678 392,678 393,678 394,678 395,678 396,678 397,678 398,678 399,678 400,678 401,678 402,678 403,678 404,678 405,678 406,678 407,678 408,678 409,678 410,678 411,678 412,678 413,678 414,678 415,678 416,678 417,678 418,678 419,678 420,678 421,678 422,678 423,678 424,678 425,678 426,678 427,678 428,678 429,678 430,678 431,678 432,678 433,678 434,678 435,678 436,678 437,678 438,678 439,678 440,678 441,678 442,678 443,678 444,678 445,678 446,678 447,678 448,678 449,678 450,678 451,678 452,678 453,678 454,678 455,678 456,678 457,678 458,678 459,678 460,678 461,678 462,678 463,678 464,678 465,678 466,678 467,678 468,678 469,678 470,678 471,678 472,678 473,678 474,678 475,678 476,678 477,678 478,678 479,678 480,678 481,678 482,678 483,678 484,678 485,678 486,678 487,678 488,678 489,678 490,678 491,678 492,678 493,678 494,678 495,678 496,678 497,678 498,678 499,678 500,678 501,678 502,678 503,678 504,678 505,678 506,678 507,678 508,678 509,678 510,678 511,678 512,678 513,678 514,678 515,678 516,678 517,678 518,678 519,678 520,678 521,678 522,678 523,678 524,678 525,678 526,678 527,678 528,678 529,678 530,678 531,678 532,678 533,678 534,678 535,678 536,678 537,678 538,678 539,678 540,678 541,678 542,678 543,678 544,678 545,678 546,678 547,678 548,678 549,678 550,678 551,678 552,678 553,678 554,678 555,678 556,678 557,678 558,678 559,678 560,678 561,678 562,678 563,678 564,678 565,678 566,678 567,678 568,678 569,678 570,678 571,678 572,678 573,678 574,678 575,678 576,678 577,678 577,684 253,684Z" fill="#55cc88" shape-rendering="auto"/>
<path d="M253,680.2 254,680.2 255,680.2 256,680.2 257,680.2 258,680.2 259,680.2 260,680.2 261,680.2 262,680.2 263,680.2 264,680.2 265,680.2 266,680.2 267,680.2 268,680.2 269,680.2 270,680.2 271,680.2 272,680.2 273,680.2 274,680.2 275,680.2 276,680.2 277,680.2 278,680.2 279,680.2 280,680.2 281,680.2 282,680.2 283,680.2 284,680.2 285,680.2 286,680.2 287,680.2 288,680.2 289,680.2 290,680.2 291,680.2 292,680.2 293,680.2 294,680.2 295,680.2 296,680.2 297,680.2 298,680.2 299,680.2 300,680.2 301,680.2 302,680.2 303,680.2 304,680.2 305,680.2 306,680.2 307,680.2 308,680.2 309,680.2 310,680.2 311,680.2 312,680.2 313,680.2 314,680.2 315,680.2 316,680.2 317,680.2 318,680.2 319,680.2 320,680.2 321,680.2 322,680.2 323,680.2 324,680.2 325,680.2 326,680.2 327,680.2 328,680.2 329,680.2 330,680.2 331,680.2 332,680.2 333,680.2 334,680.2 335,680.2 336,680.2 337,680.2 338,680.2 339,680.2 340,680.2 341,680.2 342,680.2 343,680.2 344,680.2 345,680.2 346,680.2 347,680.2 348,680.2 349,680.2 350,680.2 351,680.2 352,680.2 353,680.2 354,680.2 355,680.2 356,680.2 357,680.2 358,680.2 359,680.2 360,680.2 361,680.2 362,680.2 363,680.2 364,680.2 365,680.2 366,680.2 367,680.2 368,680.2 369,680.2 370,680.2 371,680.2 372,680.2 373,680.2 374,680.2 375,680.2 376,680.2 377,680.2 378,680.2 379,680.2 380,680.2 381,680.2 382,680.2 383,680.2 384,680.2 385,680.2 386,680.2 387,680.2 388,680.2 389,680.2 390,680.2 391,680.2 392,680.2 393,680.2 394,680.2 395,680.2 396,680.2 397,680.2 398,680.2 399,680.2 400,680.2 401,680.2 402,680.2 403,680.2 404,680.2 405,680.2 406,680.2 407,680.2 408,680.2 409,680.2 410,680.2 411,680.2 412,680.2 413,680.2 414,680.2 415,680.2 416,680.2 417,680.2 418,680.2 419,680.2 420,680.2 421,680.2 422,680.2 423,680.2 424,680.2 425,680.2 426,680.2 427,680.2 428,680.2 429,680.2 430,680.2 431,680.2 432,680.2 433,680.2 434,680.2 435,680.2 436,680.2 437,680.2 438,680.2 439,680.2 440,680.2 441,680.2 442,680.2 443,680.2 444,680.2 445,680.2 446,680.2 447,680.2 448,680.2 449,680.2 450,680.2 451,680.2 452,680.2 453,680.2 454,680.2 455,680.2 456,680.2 457,680.2 458,680.2 459,680.2 460,680.2 461,680.2 462,680.2 463,680.2 464,680.2 465,680.2 466,680.2 467,680.2 468,680.2 469,680.2 470,680.2 471,680.2 472,680.2 473,680.2 474,680.2 475,680.2 476,680.2 477,680.2 478,680.2 479,680.2 480,680.2 481,680.2 482,680.2 483,680.2 484,680.2 485,680.2 486,680.2 487,680.2 488,680.2 489,680.2 490,680.2 491,680.2 492,680.2 493,680.2 494,680.2 495,680.2 496,680.2 497,680.2 498,680.2 499,680.2 500,680.2 501,680.2 502,680.2 503,680.2 504,680.2 505,680.2 506,680.2 507,680.2 508,680.2 509,680.2 510,680.2 511,680.2 512,680.2 513,680.2 514,680.2 515,680.2 516,680.2 517,680.2 518,680.2 519,680.2 520,680.2 521,680.2 522,680.2 523,680.2 524,680.2 525,680.2 526,680.2 527,680.2 528,680.2 529,680.2 530,680.2 531,680.2 532,680.2 533,680.2 534,680.2 535,680.2 536,680.2 537,680.2 538,680.2 539,680.2 540,680.2 541,680.2 542,680.2 543,680.2 544,680.2 545,680.2 546,680.2 547,680.2 548,680.2 549,680.2 550,680.2 551,680.2 552,680.2 553,680.2 554,680.2 555,680.2 556,680.2 557,680.2 558,680.2 559,680.2 560,680.2 561,680.2 562,680.2 563,680.2 564,680.2 565,680.2 566,680.2 567,680.2 568,680.2 569,680.2 570,680.2 571,680.2 572,680.2 573,680.2 574,680.2 575,680.2 576,680.2 577,680.2 577,684 253,684Z" fill="#ee9944" shape-rendering="auto"/>
<line x1="251" y1="683.5" x2="253" y2="683.5" stroke="#a8a8a2" stroke-width="1" stroke-dasharray="1 1"/>
<line x1="253" y1="676.5" x2="577" y2="676.5" stroke="#4c4c42" stroke-width="1" stroke-dasharray="1 1"/>
<line x1="251" y1="668.5" x2="577" y2="668.5" stroke="#a8a8a2" stroke-width="1" stroke-dasharray="1 1"/>
<line x1="253" y1="660.5" x2="577" y2="660.5" stroke="#4c4c42" stroke-width="1" stroke-dasharray="1 1"/>
<line x1="251" y1="653.5" x2="577" y2="653.5" stroke="#a8a8a2" stroke-width="1" stroke-dasharray="1 1"/>
<line x1="253" y1="646.5" x2="577" y2="646.5" stroke="#4c4c42" stroke-width="1" stroke-dasharray="1 1"/>
<line x1="251" y1="638.5" x2="577" y2="638.5" stroke="#a8a8a2" stroke-width="1" stroke-dasharray="1 1"/>
<line x1="253" y1="630.5" x2="577" y2="630.5" stroke="#4c4c42" stroke-width="1" stroke-dasharray="1 1"/>
<line x1="251" y1="623.5" x2="577" y2="623.5" stroke="#a8a8a2" stroke-width="1" stroke-dasharray="1 1"/>
<line x1="253" y1="616.5" x2="577" y2="616.5" stroke="#4c4c42" stroke-width="1" stroke-dasharray="1 1"/>
<line x1="251" y1="608.5" x2="577" y2="608.5" stroke="#a8a8a2" stroke-width="1" stroke-dasharray="1 1"/>
<line x1="253" y1="600.5" x2="577" y2="600.5" stroke="#4c4c42" stroke-width="1" stroke-dasharray="1 1"/>
<line x1="251" y1="593.5" x2="577" y2="593.5" stroke="#a8a8a2" stroke-width="1" stroke-dasharray="1 1"/>
<line x1="253" y1="586.5" x2="577" y2="586.5" stroke="#4c4c42" stroke-width="1" stroke-dasharray="1 1"/>
<line x1="251" y1="578.5" x2="577" y2="578.5" stroke="#a8a8a2" stroke-width="1" stroke-dasharray="1 1"/>
<line x1="253" y1="570.5" x2="577" y2="570.5" stroke="#4c4c42" stroke-width="1" stroke-dasharray="1 1"/>
<line x1="251" y1="563.5" x2="577" y2="563.5" stroke="#a8a8a2" stroke-width="1" stroke-dasharray="1 1"/>
<line x1="253" y1="556.5" x2="577" y2="556.5" stroke="#4c4c42" stroke-width="1" stroke-dasharray="1 1"/>
<line x1="251" y1="548.5" x2="577" y2="548.5" stroke="#a8a8a2" stroke-width="1" stroke-dasharray="1 1"/>
<line x1="253" y1="540.5" x2="577" y2="540.5" stroke="#4c4c42" stroke-width="1" stroke-dasharray="1 1"/>
<line x1="251" y1="533.5" x2="577" y2="533.5" stroke="#a8a8a2" stroke-width="1" stroke-dasharray="1 1"/>
<line x1="257.5" y1="533" x2="257.5" y2="684" stroke="#4c4c42" stroke-width="1" stroke-dasharray="1 1"/>
<line x1="271.5" y1="533" x2="271.5" y2="684" stroke="#4c4c42" stroke-width="1" stroke-dasharray="1 1"/>
<line x1="284.5" y1="533" x2="284.5" y2="684" stroke="#4c4c42" stroke-width="1" stroke-dasharray="1 1"/>
<line x1="298.5" y1="533" x2="298.5" y2="686" stroke="#a8a8a2" stroke-width="1" stroke-dasharray="1 1"/>
<line x1="311.5" y1="533" x2="311.5" y2="684" stroke="#4c4c42" stroke-width="1" stroke-dasharray="1 1"/>
<line x1="325.5" y1="533" x2="325.5" y2="684" stroke="#4c4c42" stroke-width="1" stroke-dasharray="1 1"/>
<line x1="338.5" y1="533" x2="338.5" y2="684" stroke="#4c4c42" stroke-width="1" stroke-dasharray="1 1"/>
<line x1="352.5" y1="533" x2="352.5" y2="684" stroke="#4c4c42" stroke-width="1" stroke-dasharray="1 1"/>
<line x1="365.5" y1="533" x2="365.5" y2="684" stroke="#4c4c42" stroke-width="1" stroke-dasharray="1 1"/>
<line x1="379.5" y1="533" x2="379.5" y2="686" stroke="#a8a8a2" stroke-width="1" stroke-dasharray="1 1"/>
<line x1="392.5" y1="533" x2="392.5" y2="684" stroke="#4c4c42" stroke-width="1" stroke-dasharray="1 1"/>
<line x1="406.5" y1="533" x2="406.5" y2="684" stroke="#4c4c42" stroke-width="1" stroke-dasharray="1 1"/>
<line x1="419.5" y1="533" x2="419.5" y2="684" stroke="#4c4c42" stroke-width="1" stroke-dasharray="1 1"/>
<line x1="433.5" y1="533" x2="433.5" y2="684" stroke="#4c4c42" stroke-width="1" stroke-dasharray="1 1"/>
<line x1="446.5" y1="533" x2="446.5" y2="684" stroke="#4c4c42" stroke-width="1" stroke-dasharray="1 1"/>
<line x1="460.5" y1="533" x2="460.5" y2="686" stroke="#a8a8a2" stroke-width="1" stroke-dasharray="1 1"/>
<line x1="473.5" y1="533" x2="473.5" y2="684" stroke="#4c4c42" stroke-width="1" stroke-dasharray="1 1"/>
<line x1="487.5" y1="533" x2="487.5" y2="684" stroke="#4c4c42" stroke-width="1" stroke-dasharray="1 1"/>
<line x1="500.5" y1="533" x2="500.5" y2="684" stroke="#4c4c42" stroke-width="1" stroke-dasharray="1 1"/>
<line x1="514.5" y1="533" x2="514.5" y2="684" stroke="#4c4c42" stroke-width="1" stroke-dasharray="1 1"/>
<line x1="527.5" y1="533" x2="527.5" y2="684" stroke="#4c4c42" stroke-width="1" stroke-dasharray="1 1"/>
<line x1="541.5" y1="533" x2="541.5" y2="686" stroke="#a8a8a2" stroke-width="1" stroke-dasharray="1 1"/>
<line x1="554.5" y1="533" x2="554.5" y2="684" stroke="#4c4c42" stroke-width="1" stroke-dasharray="1 1"/>
<line x1="568.5" y1="533" x2="568.5" y2="684" stroke="#4c4c42" stroke-width="1" stroke-dasharray="1 1"/>
<path d="M250,530 L256,530 L253,524Z" fill="#fff" shape-rendering="auto"/>
<path d="M579,680.5 L579,686.5 L585,683.5Z" fill="#fff" shape-rendering="auto"/>
<text x="246" y="687" font-size="10" fill="#c8c8c8" text-anchor="end"  xml:space="preserve">0</text>
<text x="246" y="672" font-size="10" fill="#c8c8c8" text-anchor="end"  xml:space="preserve">10</text>
<text x="246" y="657" font-size="10" fill="#c8c8c8" text-anchor="end"  xml:space="preserve">20</text>
<text x="246" y="642" font-size="10" fill="#c8c8c8" text-anchor="end"  xml:space="preserve">30</text>
<text x="246" y="627" font-size="10" fill="#c8c8c8" text-anchor="end"  xml:space="preserve">40</text>
<text x="246" y="612" font-size="10" fill="#c8c8c8" text-anchor="end"  xml:space="preserve">50</text>
<text x="246" y="597" font-size="10" fill="#c8c8c8" text-anchor="end"  xml:space="preserve">60</text>
<text x="246" y="582" font-size="10" fill="#c8c8c8" text-anchor="end"  xml:space="preserve">70</text>
<text x="246" y="567" font-size="10" fill="#c8c8c8" text-anchor="end"  xml:space="preserve">80</text>
<text x="246" y="552" font-size="10" fill="#c8c8c8" text-anchor="end"  xml:space="preserve">90</text>
<text x="246" y="537" font-size="10" fill="#c8c8c8" text-anchor="end"  xml:space="preserve">100</text>
<text x="298.5" y="696" font-size="10" fill="#c8c8c8" text-anchor="middle"  xml:space="preserve">18:00</text>
<text x="379.5" y="696" font-size="10" fill="#c8c8c8" text-anchor="middle"  xml:space="preserve">00:00</text>
<text x="460.5" y="696" font-size="10" fill="#c8c8c8" text-anchor="middle"  xml:space="preserve">06:00</text>
<text x="541.5" y="696" font-size="10" fill="#c8c8c8" text-anchor="middle"  xml:space="preserve">12:00</text>
<text x="332" y="529" font-size="11.67" fill="#c8c8c8" text-anchor="start"  xml:space="preserve">Processor 0  (1day)</text>
<g transform="translate(201.5,608.5) rotate(-90)"><text x="0" y="0" font-size="10" fill="#c8c8c8" text-anchor="middle"  xml:space="preserve">Percent (%)</text></g>
<g transform="translate(596,512) rotate(90)"><text x="0" y="0" font-size="8.3" fill="#4a4a4a" text-anchor="start"  xml:space="preserve">RRDTOOL / TOBI OETIKER</text></g>
<rect x="201" y="704" width="8" height="8" fill="#777"/><rect x="202" y="705" width="6" height="6" fill="#4444ee"/>
<text x="214" y="711" font-size="10" fill="#c8c8c8" text-anchor="start"  xml:space="preserve">user</text>
<text x="276.6" y="711" font-size="10" fill="#c8c8c8" text-anchor="start"  xml:space="preserve">Cur:  9.7%</text>
<text x="362.6" y="711" font-size="10" fill="#c8c8c8" text-anchor="start"  xml:space="preserve">Avg:  8.3%</text>
<text x="447.9" y="711" font-size="10" fill="#c8c8c8" text-anchor="start"  xml:space="preserve">Min:  4.9%</text>
<text x="533.6" y="711" font-size="10" fill="#c8c8c8" text-anchor="start"  xml:space="preserve">Max: 22.5%</text>
<rect x="201" y="716" width="8" height="8" fill="#777"/><rect x="202" y="717" width="6" height="6" fill="#eeee44"/>
<text x="214" y="723" font-size="10" fill="#c8c8c8" text-anchor="start"  xml:space="preserve">nice</text>
<text x="276.6" y="723" font-size="10" fill="#c8c8c8" text-anchor="start"  xml:space="preserve">Cur:  0.0%</text>
<text x="362.6" y="723" font-size="10" fill="#c8c8c8" text-anchor="start"  xml:space="preserve">Avg:  0.0%</text>
<text x="447.9" y="723" font-size="10" fill="#c8c8c8" text-anchor="start"  xml:space="preserve">Min:  0.0%</text>
<text x="533.6" y="723" font-size="10" fill="#c8c8c8" text-anchor="start"  xml:space="preserve">Max:  0.1%</text>
<rect x="201" y="728" width="8" height="8" fill="#777"/><rect x="202" y="729" width="6" height="6" fill="#44eeee"/>
<text x="214" y="735" font-size="10" fill="#c8c8c8" text-anchor="start"  xml:space="preserve">system</text>
<text x="276.6" y="735" font-size="10" fill="#c8c8c8" text-anchor="start"  xml:space="preserve">Cur:  3.3%</text>
<text x="362.6" y="735" font-size="10" fill="#c8c8c8" text-anchor="start"  xml:space="preserve">Avg:  2.8%</text>
<text x="447.9" y="735" font-size="10" fill="#c8c8c8" text-anchor="start"  xml:space="preserve">Min:  1.8%</text>
<text x="533.6" y="735" font-size="10" fill="#c8c8c8" text-anchor="start"  xml:space="preserve">Max:  6.4%</text>
<rect x="201" y="740" width="8" height="8" fill="#777"/><rect x="202" y="741" width="6" height="6" fill="#ee44ee"/>
<text x="214" y="747" font-size="10" fill="#c8c8c8" text-anchor="start"  xml:space="preserve">I/O wait</text>
<text x="276.6" y="747" font-size="10" fill="#c8c8c8" text-anchor="start"  xml:space="preserve">Cur:  0.1%</text>
<text x="362.6" y="747" font-size="10" fill="#c8c8c8" text-anchor="start"  xml:space="preserve">Avg:  0.1%</text>
<text x="447.9" y="747" font-size="10" fill="#c8c8c8" text-anchor="start"  xml:space="preserve">Min:  0.0%</text>
<text x="533.6" y="747" font-size="10" fill="#c8c8c8" text-anchor="start"  xml:space="preserve">Max:  1.1%</text>
<rect x="201" y="752" width="8" height="8" fill="#777"/><rect x="202" y="753" width="6" height="6" fill="#888888"/>
<text x="214" y="759" font-size="10" fill="#c8c8c8" text-anchor="start"  xml:space="preserve">IRQ</text>
<text x="276.6" y="759" font-size="10" fill="#c8c8c8" text-anchor="start"  xml:space="preserve">Cur:  0.0%</text>
<text x="362.6" y="759" font-size="10" fill="#c8c8c8" text-anchor="start"  xml:space="preserve">Avg:  0.0%</text>
<text x="447.9" y="759" font-size="10" fill="#c8c8c8" text-anchor="start"  xml:space="preserve">Min:  0.0%</text>
<text x="533.6" y="759" font-size="10" fill="#c8c8c8" text-anchor="start"  xml:space="preserve">Max:  0.0%</text>
<rect x="201" y="764" width="8" height="8" fill="#777"/><rect x="202" y="765" width="6" height="6" fill="#ee9944"/>
<text x="214" y="771" font-size="10" fill="#c8c8c8" text-anchor="start"  xml:space="preserve">softIRQ</text>
<text x="276.6" y="771" font-size="10" fill="#c8c8c8" text-anchor="start"  xml:space="preserve">Cur:  2.3%</text>
<text x="362.6" y="771" font-size="10" fill="#c8c8c8" text-anchor="start"  xml:space="preserve">Avg:  2.2%</text>
<text x="447.9" y="771" font-size="10" fill="#c8c8c8" text-anchor="start"  xml:space="preserve">Min:  1.2%</text>
<text x="533.6" y="771" font-size="10" fill="#c8c8c8" text-anchor="start"  xml:space="preserve">Max:  2.9%</text>
</svg>
<svg class="a" style="left:614px;top:507px" width="421" height="300" viewBox="614 507 421 300" font-family='"Liberation Mono",monospace' shape-rendering="crispEdges">
<rect x="614" y="507" width="421" height="300" fill="#404040"/>
<rect x="617" y="510" width="415" height="294" fill="#121212"/>
<rect x="680" y="533" width="324" height="151" fill="#000"/>
<path d="M680,668.7 681,661.2 682,656 683,652.7 684,650.3 685,650 686,652.4 687,654.7 688,654.7 689,653.2 690,653.2 691,655.3 692,661 693,667.5 694,669 695,667 696,664.5 697,664.2 698,668.1 699,671.4 700,672.1 701,673.7 702,674.3 703,673.7 704,673.9 705,673.3 706,672.9 707,674 708,673.3 709,673.4 710,673.2 711,672.7 712,673.2 713,673.3 714,673.4 715,673.5 716,674.1 717,673.2 718,672.9 719,673 720,673 721,672.7 722,671.7 723,672 724,672.1 725,672.3 726,672.3 727,673.2 728,674 729,673.5 730,674.3 731,674.6 732,675.8 733,678.6 734,678.6 735,676.3 736,675.2 737,674.6 738,674.6 739,675.6 740,676 741,675.2 742,674.2 743,674.5 744,675 745,674.9 746,674.7 747,675 748,675.2 749,674.8 750,674.8 751,675.2 752,675.7 753,675.5 754,674.7 755,674.7 756,675.1 757,675.1 758,675.7 759,675.9 760,675.1 761,674.4 762,674.8 763,675 764,674.6 765,674.4 766,674.1 767,674.6 768,674.6 769,674 770,674.4 771,674.5 772,674.6 773,675.2 774,675.4 775,674.9 776,675 777,675.9 778,675.2 779,674.4 780,674.8 781,674.7 782,675.2 783,675.8 784,675.5 785,675.4 786,675.5 787,675.9 788,675.7 789,674.8 790,674.1 791,674.3 792,674.8 793,675.4 794,674.8 795,674.5 796,674.8 797,675.3 798,675.9 799,675 800,674.4 801,674.3 802,674.5 803,675 804,675.1 805,674.6 806,674.9 807,675.3 808,675.3 809,675 810,675.3 811,675.4 812,674.4 813,675.1 814,675.5 815,674.8 816,674.6 817,674.6 818,675.3 819,675.5 820,674.7 821,674.2 822,675.1 823,675.9 824,676 825,676.1 826,675.7 827,675.6 828,675.1 829,674.5 830,675.3 831,675.5 832,675.3 833,675.3 834,675.4 835,675.8 836,675.8 837,675.6 838,675 839,674.8 840,675.5 841,675.4 842,674.5 843,674.4 844,674.5 845,675.3 846,675.7 847,675.6 848,675.3 849,675.2 850,675.2 851,675.1 852,675.2 853,675.1 854,675.8 855,675.7 856,675.4 857,674.9 858,674.9 859,675.3 860,675.1 861,674.6 862,675.1 863,675.4 864,675 865,674.8 866,674.3 867,674.8 868,675.1 869,674.9 870,675 871,675.5 872,675.2 873,674.2 874,674.7 875,675.5 876,674.8 877,675 878,676 879,676 880,675.2 881,674.5 882,674.9 883,675 884,675.5 885,675.5 886,675 887,675.2 888,675.2 889,675.3 890,675.5 891,675.9 892,675.7 893,675.5 894,675.2 895,674.5 896,674.5 897,674.9 898,675.4 899,675.5 900,675.2 901,675 902,674.5 903,675.1 904,675.6 905,675.1 906,674.9 907,674.4 908,674.4 909,674.7 910,674.7 911,674.6 912,674.5 913,674.5 914,674.7 915,675.2 916,674.9 917,674.8 918,675.1 919,674.6 920,674.2 921,674.1 922,675.1 923,675.9 924,675.5 925,675.4 926,675.6 927,675.4 928,675.5 929,675.8 930,674.8 931,674.4 932,674.9 933,675.6 934,675 935,674.4 936,675.2 937,675.6 938,675.1 939,674.8 940,675.2 941,674.9 942,674.8 943,675.6 944,675 945,675.1 946,675.3 947,675.2 948,675.3 949,675.2 950,675.5 951,674.8 952,674.3 953,672.5 954,668.9 955,666.2 956,665.8 957,666.1 958,666.4 959,665.2 960,659.9 961,657.6 962,657.7 963,658.8 964,662.8 965,666.8 966,667.8 967,666.7 968,666.9 969,667.5 970,668.6 971,668.8 972,667.3 973,666.3 974,666 975,664.6 976,663.6 977,664.9 978,667.5 979,667.8 980,666 981,664.2 982,663.5 983,662.4 984,660.2 985,658 986,657.4 987,657.9 988,659.9 989,662.2 990,663.7 991,665.5 992,664.5 993,664.6 994,665.9 995,665.3 996,665.1 997,665.6 998,667.2 999,667.2 1000,666 1001,664.8 1002,665.1 1003,666.3 1004,666.3 1004,684 680,684Z" fill="#4444ee" shape-rendering="auto"/>
<path d="M680,677.6 681,677.5 682,677.5 683,677.4 684,677.2 685,677.1 686,676.9 687,676.8 688,676.6 689,676.7 690,677 691,677.4 692,677.6 693,677.6 694,677.6 695,677.6 696,677.4 697,677.3 698,677.3 699,677.4 700,677.5 701,677.5 702,677.3 703,677.2 704,677.2 705,677.5 706,677.7 707,677.7 708,677.5 709,677.3 710,677.3 711,677.5 712,677.7 713,677.8 714,677.7 715,677.7 716,677.6 717,677.5 718,677.4 719,677.4 720,677.5 721,677.6 722,677.6 723,677.6 724,677.5 725,677.5 726,677.6 727,677.7 728,677.9 729,678.1 730,678.3 731,678.4 732,678.3 733,678.3 734,678.3 735,678.4 736,678.5 737,678.6 738,678.6 739,678.7 740,678.8 741,678.8 742,678.9 743,678.8 744,678.6 745,678.4 746,678.3 747,678.4 748,678.5 749,678.5 750,678.4 751,678.3 752,678.2 753,678.3 754,678.3 755,678.3 756,678.3 757,678.2 758,678.2 759,678.4 760,678.5 761,678.5 762,678.5 763,678.4 764,678.4 765,678.5 766,678.5 767,678.6 768,678.7 769,678.8 770,678.7 771,678.5 772,678.3 773,678.3 774,678.5 775,678.7 776,678.7 777,678.6 778,678.4 779,678.3 780,678.3 781,678.2 782,678.2 783,678.3 784,678.4 785,678.5 786,678.7 787,678.8 788,678.8 789,678.6 790,678.4 791,678.3 792,678.4 793,678.4 794,678.5 795,678.7 796,678.8 797,678.9 798,678.9 799,679 800,678.9 801,678.8 802,678.6 803,678.6 804,678.8 805,678.9 806,678.9 807,678.6 808,678.4 809,678.3 810,678.4 811,678.5 812,678.6 813,678.6 814,678.6 815,678.6 816,678.6 817,678.7 818,678.6 819,678.6 820,678.5 821,678.4 822,678.3 823,678.3 824,678.3 825,678.5 826,678.7 827,678.8 828,678.7 829,678.7 830,678.7 831,678.6 832,678.6 833,678.6 834,678.7 835,678.7 836,678.7 837,678.6 838,678.6 839,678.5 840,678.5 841,678.6 842,678.6 843,678.6 844,678.6 845,678.6 846,678.6 847,678.5 848,678.5 849,678.5 850,678.6 851,678.6 852,678.8 853,678.9 854,678.8 855,678.6 856,678.3 857,678.2 858,678.4 859,678.6 860,678.7 861,678.7 862,678.7 863,678.7 864,678.7 865,678.7 866,678.6 867,678.5 868,678.3 869,678.2 870,678.2 871,678.2 872,678.3 873,678.4 874,678.5 875,678.6 876,678.6 877,678.7 878,678.7 879,678.8 880,678.9 881,678.8 882,678.6 883,678.4 884,678.4 885,678.6 886,678.8 887,678.8 888,678.7 889,678.6 890,678.6 891,678.6 892,678.7 893,678.7 894,678.7 895,678.8 896,678.8 897,678.7 898,678.7 899,678.8 900,678.8 901,678.9 902,678.9 903,678.9 904,679 905,678.9 906,678.8 907,678.6 908,678.5 909,678.5 910,678.4 911,678.4 912,678.4 913,678.4 914,678.5 915,678.7 916,678.8 917,678.8 918,678.6 919,678.5 920,678.5 921,678.7 922,678.9 923,678.9 924,678.8 925,678.7 926,678.6 927,678.5 928,678.4 929,678.3 930,678.3 931,678.2 932,678.3 933,678.4 934,678.6 935,678.6 936,678.5 937,678.3 938,678.3 939,678.4 940,678.5 941,678.6 942,678.6 943,678.6 944,678.6 945,678.6 946,678.5 947,678.5 948,678.3 949,678.2 950,678.2 951,678.3 952,678.3 953,678.3 954,678.1 955,677.8 956,677.6 957,677.5 958,677.3 959,677.2 960,677.3 961,677.4 962,677.6 963,677.7 964,677.9 965,677.9 966,677.9 967,677.8 968,677.7 969,677.7 970,677.7 971,677.7 972,677.7 973,677.8 974,677.7 975,677.6 976,677.5 977,677.6 978,677.8 979,678.1 980,678.2 981,678 982,677.8 983,677.7 984,677.7 985,677.6 986,677.6 987,677.7 988,677.8 989,677.9 990,678 991,678 992,678 993,677.9 994,677.7 995,677.7 996,677.8 997,677.9 998,678 999,678.1 1000,678.1 1001,678.2 1002,678.3 1003,678.4 1004,678.4 1004,684 680,684Z" fill="#44eeee" shape-rendering="auto"/>
<path d="M680,679.8 681,679.8 682,679.8 683,679.8 684,679.8 685,679.8 686,679.8 687,679.8 688,679.8 689,679.8 690,679.8 691,679.8 692,679.8 693,679.8 694,679.8 695,679.8 696,679.8 697,679.8 698,679.8 699,679.8 700,679.8 701,679.8 702,679.8 703,679.8 704,679.8 705,679.8 706,679.8 707,679.8 708,679.8 709,679.8 710,679.8 711,679.8 712,679.8 713,679.8 714,679.8 715,679.8 716,679.8 717,679.8 718,679.8 719,679.8 720,679.8 721,679.8 722,679.8 723,679.8 724,679.8 725,679.8 726,679.8 727,679.8 728,679.8 729,679.8 730,679.8 731,679.5 732,678.9 733,678.6 734,678.6 735,678.6 736,678.6 737,678.6 738,678.6 739,678.6 740,678.6 741,678.6 742,678.6 743,678.6 744,678.6 745,678.6 746,678.6 747,678.6 748,678.6 749,678.6 750,678.6 751,678.6 752,678.6 753,678.6 754,678.6 755,678.6 756,678.6 757,678.6 758,678.6 759,678.6 760,678.6 761,678.6 762,678.6 763,678.6 764,678.6 765,678.6 766,678.6 767,678.6 768,678.6 769,678.6 770,678.6 771,678.6 772,678.6 773,678.6 774,678.6 775,678.6 776,678.6 777,678.6 778,678.6 779,678.6 780,678.6 781,678.6 782,678.6 783,678.6 784,678.6 785,678.6 786,678.6 787,678.6 788,678.6 789,678.6 790,678.6 791,678.6 792,678.6 793,678.6 794,678.6 795,678.6 796,678.6 797,678.6 798,678.6 799,678.6 800,678.6 801,678.6 802,678.6 803,678.6 804,678.6 805,678.6 806,678.6 807,678.6 808,678.6 809,678.6 810,678.6 811,678.6 812,678.6 813,678.6 814,678.6 815,678.6 816,678.6 817,678.6 818,678.6 819,678.6 820,678.6 821,678.6 822,678.6 823,678.6 824,678.6 825,678.6 826,678.6 827,678.6 828,678.6 829,678.6 830,678.6 831,678.6 832,678.6 833,678.6 834,678.6 835,678.6 836,678.6 837,678.6 838,678.6 839,678.6 840,678.6 841,678.6 842,678.6 843,678.6 844,678.6 845,678.6 846,678.6 847,678.6 848,678.6 849,678.6 850,678.6 851,678.6 852,678.6 853,678.6 854,678.6 855,678.6 856,678.6 857,678.6 858,678.6 859,678.6 860,678.6 861,678.6 862,678.6 863,678.6 864,678.6 865,678.6 866,678.6 867,678.6 868,678.6 869,678.6 870,678.6 871,678.6 872,678.6 873,678.6 874,678.6 875,678.6 876,678.6 877,678.6 878,678.6 879,678.6 880,678.6 881,678.6 882,678.6 883,678.6 884,678.6 885,678.6 886,678.6 887,678.6 888,678.6 889,678.6 890,678.6 891,678.6 892,678.6 893,678.6 894,678.6 895,678.6 896,678.6 897,678.6 898,678.6 899,678.6 900,678.6 901,678.6 902,678.6 903,678.6 904,678.6 905,678.6 906,678.6 907,678.6 908,678.6 909,678.6 910,678.6 911,678.6 912,678.6 913,678.6 914,678.6 915,678.6 916,678.6 917,678.6 918,678.6 919,678.6 920,678.6 921,678.6 922,678.6 923,678.6 924,678.6 925,678.6 926,678.6 927,678.6 928,678.6 929,678.6 930,678.6 931,678.6 932,678.6 933,678.6 934,678.6 935,678.6 936,678.6 937,678.6 938,678.6 939,678.6 940,678.6 941,678.6 942,678.6 943,678.6 944,678.6 945,678.6 946,678.6 947,678.6 948,678.6 949,678.6 950,678.6 951,678.6 952,678.6 953,678.6 954,679.1 955,680.2 956,680.7 957,680.7 958,680.7 959,680.7 960,680.7 961,680.7 962,680.7 963,680.7 964,680.7 965,680.7 966,680.7 967,680.7 968,680.7 969,680.7 970,680.7 971,680.7 972,680.7 973,680.7 974,680.7 975,680.7 976,680.7 977,680.7 978,680.7 979,680.7 980,680.7 981,680.7 982,680.7 983,680.7 984,680.7 985,680.7 986,680.7 987,680.7 988,680.7 989,680.7 990,680.7 991,680.7 992,680.7 993,680.7 994,680.7 995,680.7 996,680.7 997,680.7 998,680.7 999,680.7 1000,680.7 1001,680.7 1002,680.7 1003,680.7 1004,680.7 1004,684 680,684Z" fill="#e8944a" shape-rendering="auto"/>
<path d="M680,679.8 681,679.8 682,679.8 683,679.8 684,679.8 685,679.8 686,679.8 687,679.8 688,679.8 689,679.8 690,679.8 691,679.8 692,679.8 693,679.8 694,679.8 695,679.8 696,679.8 697,679.8 698,679.8 699,679.8 700,679.8 701,679.8 702,679.8 703,679.8 704,679.8 705,679.8 706,679.8 707,679.8 708,679.8 709,679.8 710,679.8 711,679.8 712,679.8 713,679.8 714,679.8 715,679.8 716,679.8 717,679.8 718,679.8 719,679.8 720,679.8 721,679.8 722,679.8 723,679.8 724,679.8 725,679.8 726,679.8 727,679.8 728,679.8 729,679.8 730,679.8 731,679.9 732,680.1 733,680.2 734,680.2 735,680.2 736,680.2 737,680.2 738,680.2 739,680.2 740,680.2 741,680.2 742,680.2 743,680.2 744,680.2 745,680.2 746,680.2 747,680.2 748,680.2 749,680.2 750,680.2 751,680.2 752,680.2 753,680.2 754,680.2 755,680.2 756,680.2 757,680.2 758,680.2 759,680.2 760,680.2 761,680.2 762,680.2 763,680.2 764,680.2 765,680.2 766,680.2 767,680.2 768,680.2 769,680.2 770,680.2 771,680.2 772,680.2 773,680.2 774,680.2 775,680.2 776,680.2 777,680.2 778,680.2 779,680.2 780,680.2 781,680.2 782,680.2 783,680.2 784,680.2 785,680.2 786,680.2 787,680.2 788,680.2 789,680.2 790,680.2 791,680.2 792,680.2 793,680.2 794,680.2 795,680.2 796,680.2 797,680.2 798,680.2 799,680.2 800,680.2 801,680.2 802,680.2 803,680.2 804,680.2 805,680.2 806,680.2 807,680.2 808,680.2 809,680.2 810,680.2 811,680.2 812,680.2 813,680.2 814,680.2 815,680.2 816,680.2 817,680.2 818,680.2 819,680.2 820,680.2 821,680.2 822,680.2 823,680.2 824,680.2 825,680.2 826,680.2 827,680.2 828,680.2 829,680.2 830,680.2 831,680.2 832,680.2 833,680.2 834,680.2 835,680.2 836,680.2 837,680.2 838,680.2 839,680.2 840,680.2 841,680.2 842,680.2 843,680.2 844,680.2 845,680.2 846,680.2 847,680.2 848,680.2 849,680.2 850,680.2 851,680.2 852,680.2 853,680.2 854,680.2 855,680.2 856,680.2 857,680.2 858,680.2 859,680.2 860,680.2 861,680.2 862,680.2 863,680.2 864,680.2 865,680.2 866,680.2 867,680.2 868,680.2 869,680.2 870,680.2 871,680.2 872,680.2 873,680.2 874,680.2 875,680.2 876,680.2 877,680.2 878,680.2 879,680.2 880,680.2 881,680.2 882,680.2 883,680.2 884,680.2 885,680.2 886,680.2 887,680.2 888,680.2 889,680.2 890,680.2 891,680.2 892,680.2 893,680.2 894,680.2 895,680.2 896,680.2 897,680.2 898,680.2 899,680.2 900,680.2 901,680.2 902,680.2 903,680.2 904,680.2 905,680.2 906,680.2 907,680.2 908,680.2 909,680.2 910,680.2 911,680.2 912,680.2 913,680.2 914,680.2 915,680.2 916,680.2 917,680.2 918,680.2 919,680.2 920,680.2 921,680.2 922,680.2 923,680.2 924,680.2 925,680.2 926,680.2 927,680.2 928,680.2 929,680.2 930,680.2 931,680.2 932,680.2 933,680.2 934,680.2 935,680.2 936,680.2 937,680.2 938,680.2 939,680.2 940,680.2 941,680.2 942,680.2 943,680.2 944,680.2 945,680.2 946,680.2 947,680.2 948,680.2 949,680.2 950,680.2 951,680.2 952,680.2 953,680.2 954,680.4 955,680.8 956,681 957,681 958,681 959,681 960,681 961,681 962,681 963,681 964,681 965,681 966,681 967,681 968,681 969,681 970,681 971,681 972,681 973,681 974,681 975,681 976,681 977,681 978,681 979,681 980,681 981,681 982,681 983,681 984,681 985,681 986,681 987,681 988,681 989,681 990,681 991,681 992,681 993,681 994,681 995,681 996,681 997,681 998,681 999,681 1000,681 1001,681 1002,681 1003,681 1004,681 1004,684 680,684Z" fill="#55cc88" shape-rendering="auto"/>
<path d="M680,679.8 681,679.8 682,679.8 683,679.8 684,679.8 685,679.8 686,679.8 687,679.8 688,679.8 689,679.8 690,679.8 691,679.8 692,679.8 693,679.8 694,679.8 695,679.8 696,679.8 697,679.8 698,679.8 699,679.8 700,679.8 701,679.8 702,679.8 703,679.8 704,679.8 705,679.8 706,679.8 707,679.8 708,679.8 709,679.8 710,679.8 711,679.8 712,679.8 713,679.8 714,679.8 715,679.8 716,679.8 717,679.8 718,679.8 719,679.8 720,679.8 721,679.8 722,679.8 723,679.8 724,679.8 725,679.8 726,679.8 727,679.8 728,679.8 729,679.8 730,679.8 731,680.5 732,681.8 733,682.5 734,682.5 735,682.5 736,682.5 737,682.5 738,682.5 739,682.5 740,682.5 741,682.5 742,682.5 743,682.5 744,682.5 745,682.5 746,682.5 747,682.5 748,682.5 749,682.5 750,682.5 751,682.5 752,682.5 753,682.5 754,682.5 755,682.5 756,682.5 757,682.5 758,682.5 759,682.5 760,682.5 761,682.5 762,682.5 763,682.5 764,682.5 765,682.5 766,682.5 767,682.5 768,682.5 769,682.5 770,682.5 771,682.5 772,682.5 773,682.5 774,682.5 775,682.5 776,682.5 777,682.5 778,682.5 779,682.5 780,682.5 781,682.5 782,682.5 783,682.5 784,682.5 785,682.5 786,682.5 787,682.5 788,682.5 789,682.5 790,682.5 791,682.5 792,682.5 793,682.5 794,682.5 795,682.5 796,682.5 797,682.5 798,682.5 799,682.5 800,682.5 801,682.5 802,682.5 803,682.5 804,682.5 805,682.5 806,682.5 807,682.5 808,682.5 809,682.5 810,682.5 811,682.5 812,682.5 813,682.5 814,682.5 815,682.5 816,682.5 817,682.5 818,682.5 819,682.5 820,682.5 821,682.5 822,682.5 823,682.5 824,682.5 825,682.5 826,682.5 827,682.5 828,682.5 829,682.5 830,682.5 831,682.5 832,682.5 833,682.5 834,682.5 835,682.5 836,682.5 837,682.5 838,682.5 839,682.5 840,682.5 841,682.5 842,682.5 843,682.5 844,682.5 845,682.5 846,682.5 847,682.5 848,682.5 849,682.5 850,682.5 851,682.5 852,682.5 853,682.5 854,682.5 855,682.5 856,682.5 857,682.5 858,682.5 859,682.5 860,682.5 861,682.5 862,682.5 863,682.5 864,682.5 865,682.5 866,682.5 867,682.5 868,682.5 869,682.5 870,682.5 871,682.5 872,682.5 873,682.5 874,682.5 875,682.5 876,682.5 877,682.5 878,682.5 879,682.5 880,682.5 881,682.5 882,682.5 883,682.5 884,682.5 885,682.5 886,682.5 887,682.5 888,682.5 889,682.5 890,682.5 891,682.5 892,682.5 893,682.5 894,682.5 895,682.5 896,682.5 897,682.5 898,682.5 899,682.5 900,682.5 901,682.5 902,682.5 903,682.5 904,682.5 905,682.5 906,682.5 907,682.5 908,682.5 909,682.5 910,682.5 911,682.5 912,682.5 913,682.5 914,682.5 915,682.5 916,682.5 917,682.5 918,682.5 919,682.5 920,682.5 921,682.5 922,682.5 923,682.5 924,682.5 925,682.5 926,682.5 927,682.5 928,682.5 929,682.5 930,682.5 931,682.5 932,682.5 933,682.5 934,682.5 935,682.5 936,682.5 937,682.5 938,682.5 939,682.5 940,682.5 941,682.5 942,682.5 943,682.5 944,682.5 945,682.5 946,682.5 947,682.5 948,682.5 949,682.5 950,682.5 951,682.5 952,682.5 953,682.5 954,682.1 955,681.4 956,681 957,681 958,681 959,681 960,681 961,681 962,681 963,681 964,681 965,681 966,681 967,681 968,681 969,681 970,681 971,681 972,681 973,681 974,681 975,681 976,681 977,681 978,681 979,681 980,681 981,681 982,681 983,681 984,681 985,681 986,681 987,681 988,681 989,681 990,681 991,681 992,681 993,681 994,681 995,681 996,681 997,681 998,681 999,681 1000,681 1001,681 1002,681 1003,681 1004,681 1004,684 680,684Z" fill="#ee9944" shape-rendering="auto"/>
<line x1="678" y1="683.5" x2="680" y2="683.5" stroke="#a8a8a2" stroke-width="1" stroke-dasharray="1 1"/>
<line x1="680" y1="676.5" x2="1004" y2="676.5" stroke="#4c4c42" stroke-width="1" stroke-dasharray="1 1"/>
<line x1="678" y1="668.5" x2="1004" y2="668.5" stroke="#a8a8a2" stroke-width="1" stroke-dasharray="1 1"/>
<line x1="680" y1="660.5" x2="1004" y2="660.5" stroke="#4c4c42" stroke-width="1" stroke-dasharray="1 1"/>
<line x1="678" y1="653.5" x2="1004" y2="653.5" stroke="#a8a8a2" stroke-width="1" stroke-dasharray="1 1"/>
<line x1="680" y1="646.5" x2="1004" y2="646.5" stroke="#4c4c42" stroke-width="1" stroke-dasharray="1 1"/>
<line x1="678" y1="638.5" x2="1004" y2="638.5" stroke="#a8a8a2" stroke-width="1" stroke-dasharray="1 1"/>
<line x1="680" y1="630.5" x2="1004" y2="630.5" stroke="#4c4c42" stroke-width="1" stroke-dasharray="1 1"/>
<line x1="678" y1="623.5" x2="1004" y2="623.5" stroke="#a8a8a2" stroke-width="1" stroke-dasharray="1 1"/>
<line x1="680" y1="616.5" x2="1004" y2="616.5" stroke="#4c4c42" stroke-width="1" stroke-dasharray="1 1"/>
<line x1="678" y1="608.5" x2="1004" y2="608.5" stroke="#a8a8a2" stroke-width="1" stroke-dasharray="1 1"/>
<line x1="680" y1="600.5" x2="1004" y2="600.5" stroke="#4c4c42" stroke-width="1" stroke-dasharray="1 1"/>
<line x1="678" y1="593.5" x2="1004" y2="593.5" stroke="#a8a8a2" stroke-width="1" stroke-dasharray="1 1"/>
<line x1="680" y1="586.5" x2="1004" y2="586.5" stroke="#4c4c42" stroke-width="1" stroke-dasharray="1 1"/>
<line x1="678" y1="578.5" x2="1004" y2="578.5" stroke="#a8a8a2" stroke-width="1" stroke-dasharray="1 1"/>
<line x1="680" y1="570.5" x2="1004" y2="570.5" stroke="#4c4c42" stroke-width="1" stroke-dasharray="1 1"/>
<line x1="678" y1="563.5" x2="1004" y2="563.5" stroke="#a8a8a2" stroke-width="1" stroke-dasharray="1 1"/>
<line x1="680" y1="556.5" x2="1004" y2="556.5" stroke="#4c4c42" stroke-width="1" stroke-dasharray="1 1"/>
<line x1="678" y1="548.5" x2="1004" y2="548.5" stroke="#a8a8a2" stroke-width="1" stroke-dasharray="1 1"/>
<line x1="680" y1="540.5" x2="1004" y2="540.5" stroke="#4c4c42" stroke-width="1" stroke-dasharray="1 1"/>
<line x1="678" y1="533.5" x2="1004" y2="533.5" stroke="#a8a8a2" stroke-width="1" stroke-dasharray="1 1"/>
<line x1="684.5" y1="533" x2="684.5" y2="684" stroke="#4c4c42" stroke-width="1" stroke-dasharray="1 1"/>
<line x1="698.5" y1="533" x2="698.5" y2="684" stroke="#4c4c42" stroke-width="1" stroke-dasharray="1 1"/>
<line x1="711.5" y1="533" x2="711.5" y2="684" stroke="#4c4c42" stroke-width="1" stroke-dasharray="1 1"/>
<line x1="725.5" y1="533" x2="725.5" y2="686" stroke="#a8a8a2" stroke-width="1" stroke-dasharray="1 1"/>
<line x1="738.5" y1="533" x2="738.5" y2="684" stroke="#4c4c42" stroke-width="1" stroke-dasharray="1 1"/>
<line x1="752.5" y1="533" x2="752.5" y2="684" stroke="#4c4c42" stroke-width="1" stroke-dasharray="1 1"/>
<line x1="765.5" y1="533" x2="765.5" y2="684" stroke="#4c4c42" stroke-width="1" stroke-dasharray="1 1"/>
<line x1="779.5" y1="533" x2="779.5" y2="684" stroke="#4c4c42" stroke-width="1" stroke-dasharray="1 1"/>
<line x1="792.5" y1="533" x2="792.5" y2="684" stroke="#4c4c42" stroke-width="1" stroke-dasharray="1 1"/>
<line x1="806.5" y1="533" x2="806.5" y2="686" stroke="#a8a8a2" stroke-width="1" stroke-dasharray="1 1"/>
<line x1="819.5" y1="533" x2="819.5" y2="684" stroke="#4c4c42" stroke-width="1" stroke-dasharray="1 1"/>
<line x1="833.5" y1="533" x2="833.5" y2="684" stroke="#4c4c42" stroke-width="1" stroke-dasharray="1 1"/>
<line x1="846.5" y1="533" x2="846.5" y2="684" stroke="#4c4c42" stroke-width="1" stroke-dasharray="1 1"/>
<line x1="860.5" y1="533" x2="860.5" y2="684" stroke="#4c4c42" stroke-width="1" stroke-dasharray="1 1"/>
<line x1="873.5" y1="533" x2="873.5" y2="684" stroke="#4c4c42" stroke-width="1" stroke-dasharray="1 1"/>
<line x1="887.5" y1="533" x2="887.5" y2="686" stroke="#a8a8a2" stroke-width="1" stroke-dasharray="1 1"/>
<line x1="900.5" y1="533" x2="900.5" y2="684" stroke="#4c4c42" stroke-width="1" stroke-dasharray="1 1"/>
<line x1="914.5" y1="533" x2="914.5" y2="684" stroke="#4c4c42" stroke-width="1" stroke-dasharray="1 1"/>
<line x1="927.5" y1="533" x2="927.5" y2="684" stroke="#4c4c42" stroke-width="1" stroke-dasharray="1 1"/>
<line x1="941.5" y1="533" x2="941.5" y2="684" stroke="#4c4c42" stroke-width="1" stroke-dasharray="1 1"/>
<line x1="954.5" y1="533" x2="954.5" y2="684" stroke="#4c4c42" stroke-width="1" stroke-dasharray="1 1"/>
<line x1="968.5" y1="533" x2="968.5" y2="686" stroke="#a8a8a2" stroke-width="1" stroke-dasharray="1 1"/>
<line x1="981.5" y1="533" x2="981.5" y2="684" stroke="#4c4c42" stroke-width="1" stroke-dasharray="1 1"/>
<line x1="995.5" y1="533" x2="995.5" y2="684" stroke="#4c4c42" stroke-width="1" stroke-dasharray="1 1"/>
<path d="M677,530 L683,530 L680,524Z" fill="#fff" shape-rendering="auto"/>
<path d="M1006,680.5 L1006,686.5 L1012,683.5Z" fill="#fff" shape-rendering="auto"/>
<text x="673" y="687" font-size="10" fill="#c8c8c8" text-anchor="end"  xml:space="preserve">0</text>
<text x="673" y="672" font-size="10" fill="#c8c8c8" text-anchor="end"  xml:space="preserve">10</text>
<text x="673" y="657" font-size="10" fill="#c8c8c8" text-anchor="end"  xml:space="preserve">20</text>
<text x="673" y="642" font-size="10" fill="#c8c8c8" text-anchor="end"  xml:space="preserve">30</text>
<text x="673" y="627" font-size="10" fill="#c8c8c8" text-anchor="end"  xml:space="preserve">40</text>
<text x="673" y="612" font-size="10" fill="#c8c8c8" text-anchor="end"  xml:space="preserve">50</text>
<text x="673" y="597" font-size="10" fill="#c8c8c8" text-anchor="end"  xml:space="preserve">60</text>
<text x="673" y="582" font-size="10" fill="#c8c8c8" text-anchor="end"  xml:space="preserve">70</text>
<text x="673" y="567" font-size="10" fill="#c8c8c8" text-anchor="end"  xml:space="preserve">80</text>
<text x="673" y="552" font-size="10" fill="#c8c8c8" text-anchor="end"  xml:space="preserve">90</text>
<text x="673" y="537" font-size="10" fill="#c8c8c8" text-anchor="end"  xml:space="preserve">100</text>
<text x="725.5" y="696" font-size="10" fill="#c8c8c8" text-anchor="middle"  xml:space="preserve">18:00</text>
<text x="806.5" y="696" font-size="10" fill="#c8c8c8" text-anchor="middle"  xml:space="preserve">00:00</text>
<text x="887.5" y="696" font-size="10" fill="#c8c8c8" text-anchor="middle"  xml:space="preserve">06:00</text>
<text x="968.5" y="696" font-size="10" fill="#c8c8c8" text-anchor="middle"  xml:space="preserve">12:00</text>
<text x="759" y="529" font-size="11.67" fill="#c8c8c8" text-anchor="start"  xml:space="preserve">Processor 1  (1day)</text>
<g transform="translate(628.5,608.5) rotate(-90)"><text x="0" y="0" font-size="10" fill="#c8c8c8" text-anchor="middle"  xml:space="preserve">Percent (%)</text></g>
<g transform="translate(1023,512) rotate(90)"><text x="0" y="0" font-size="8.3" fill="#4a4a4a" text-anchor="start"  xml:space="preserve">RRDTOOL / TOBI OETIKER</text></g>
<rect x="628" y="704" width="8" height="8" fill="#777"/><rect x="629" y="705" width="6" height="6" fill="#4444ee"/>
<text x="641" y="711" font-size="10" fill="#c8c8c8" text-anchor="start"  xml:space="preserve">user</text>
<text x="703.6" y="711" font-size="10" fill="#c8c8c8" text-anchor="start"  xml:space="preserve">Cur:  9.0%</text>
<text x="789.6" y="711" font-size="10" fill="#c8c8c8" text-anchor="start"  xml:space="preserve">Avg:  7.5%</text>
<text x="874.9" y="711" font-size="10" fill="#c8c8c8" text-anchor="start"  xml:space="preserve">Min:  4.3%</text>
<text x="960.6" y="711" font-size="10" fill="#c8c8c8" text-anchor="start"  xml:space="preserve">Max: 22.1%</text>
<rect x="628" y="716" width="8" height="8" fill="#777"/><rect x="629" y="717" width="6" height="6" fill="#eeee44"/>
<text x="641" y="723" font-size="10" fill="#c8c8c8" text-anchor="start"  xml:space="preserve">nice</text>
<text x="703.6" y="723" font-size="10" fill="#c8c8c8" text-anchor="start"  xml:space="preserve">Cur:  0.0%</text>
<text x="789.6" y="723" font-size="10" fill="#c8c8c8" text-anchor="start"  xml:space="preserve">Avg:  0.0%</text>
<text x="874.9" y="723" font-size="10" fill="#c8c8c8" text-anchor="start"  xml:space="preserve">Min:  0.0%</text>
<text x="960.6" y="723" font-size="10" fill="#c8c8c8" text-anchor="start"  xml:space="preserve">Max:  0.1%</text>
<rect x="628" y="728" width="8" height="8" fill="#777"/><rect x="629" y="729" width="6" height="6" fill="#44eeee"/>
<text x="641" y="735" font-size="10" fill="#c8c8c8" text-anchor="start"  xml:space="preserve">system</text>
<text x="703.6" y="735" font-size="10" fill="#c8c8c8" text-anchor="start"  xml:space="preserve">Cur:  2.9%</text>
<text x="789.6" y="735" font-size="10" fill="#c8c8c8" text-anchor="start"  xml:space="preserve">Avg:  2.5%</text>
<text x="874.9" y="735" font-size="10" fill="#c8c8c8" text-anchor="start"  xml:space="preserve">Min:  1.7%</text>
<text x="960.6" y="735" font-size="10" fill="#c8c8c8" text-anchor="start"  xml:space="preserve">Max:  5.5%</text>
<rect x="628" y="740" width="8" height="8" fill="#777"/><rect x="629" y="741" width="6" height="6" fill="#ee44ee"/>
<text x="641" y="747" font-size="10" fill="#c8c8c8" text-anchor="start"  xml:space="preserve">I/O wait</text>
<text x="703.6" y="747" font-size="10" fill="#c8c8c8" text-anchor="start"  xml:space="preserve">Cur:  0.1%</text>
<text x="789.6" y="747" font-size="10" fill="#c8c8c8" text-anchor="start"  xml:space="preserve">Avg:  0.1%</text>
<text x="874.9" y="747" font-size="10" fill="#c8c8c8" text-anchor="start"  xml:space="preserve">Min:  0.0%</text>
<text x="960.6" y="747" font-size="10" fill="#c8c8c8" text-anchor="start"  xml:space="preserve">Max:  1.0%</text>
<rect x="628" y="752" width="8" height="8" fill="#777"/><rect x="629" y="753" width="6" height="6" fill="#888888"/>
<text x="641" y="759" font-size="10" fill="#c8c8c8" text-anchor="start"  xml:space="preserve">IRQ</text>
<text x="703.6" y="759" font-size="10" fill="#c8c8c8" text-anchor="start"  xml:space="preserve">Cur:  0.0%</text>
<text x="789.6" y="759" font-size="10" fill="#c8c8c8" text-anchor="start"  xml:space="preserve">Avg:  0.0%</text>
<text x="874.9" y="759" font-size="10" fill="#c8c8c8" text-anchor="start"  xml:space="preserve">Min:  0.0%</text>
<text x="960.6" y="759" font-size="10" fill="#c8c8c8" text-anchor="start"  xml:space="preserve">Max:  0.0%</text>
<rect x="628" y="764" width="8" height="8" fill="#777"/><rect x="629" y="765" width="6" height="6" fill="#ee9944"/>
<text x="641" y="771" font-size="10" fill="#c8c8c8" text-anchor="start"  xml:space="preserve">softIRQ</text>
<text x="703.6" y="771" font-size="10" fill="#c8c8c8" text-anchor="start"  xml:space="preserve">Cur:  2.2%</text>
<text x="789.6" y="771" font-size="10" fill="#c8c8c8" text-anchor="start"  xml:space="preserve">Avg:  2.1%</text>
<text x="874.9" y="771" font-size="10" fill="#c8c8c8" text-anchor="start"  xml:space="preserve">Min:  1.2%</text>
<text x="960.6" y="771" font-size="10" fill="#c8c8c8" text-anchor="start"  xml:space="preserve">Max:  2.6%</text>
</svg>

<!-- window frame & scrollbar -->
<div class="a" style="left:1px;top:1px;width:3px;height:746px;background:#e2e2e7"></div>
<div class="a" style="left:1218px;top:113px;width:18px;height:634px;background:#f1f1f1"></div>
<div class="a" style="left:1218px;top:113px;width:1px;height:634px;background:#fafafa"></div>
<div class="a" style="left:1220px;top:209px;width:11px;height:81px;background:#c1c1c1"></div>
<svg class="a" style="left:1218px;top:113px" width="18" height="634" viewBox="1218 113 18 634"><polygon points="1222,123 1229,123 1225.5,119" fill="#505050"/><polygon points="1222,737 1229,737 1225.5,741" fill="#505050"/></svg>
<div class="a" style="left:1233px;top:1px;width:3px;height:746px;background:#e4e4e9"></div>
<div class="a" style="left:1px;top:747px;width:1235px;height:2px;background:#ececee"></div>
<div class="a" style="left:0;top:749px;width:1237px;height:2px;background:#3a3a3c"></div>
<div class="a" style="left:0;top:0;width:1237px;height:1px;background:#3a3a3c"></div>
<div class="a" style="left:0;top:0;width:1px;height:751px;background:#3a3a3c"></div>
<div class="a" style="left:1236px;top:0;width:1px;height:751px;background:#3a3a3c"></div>
</body></html>
